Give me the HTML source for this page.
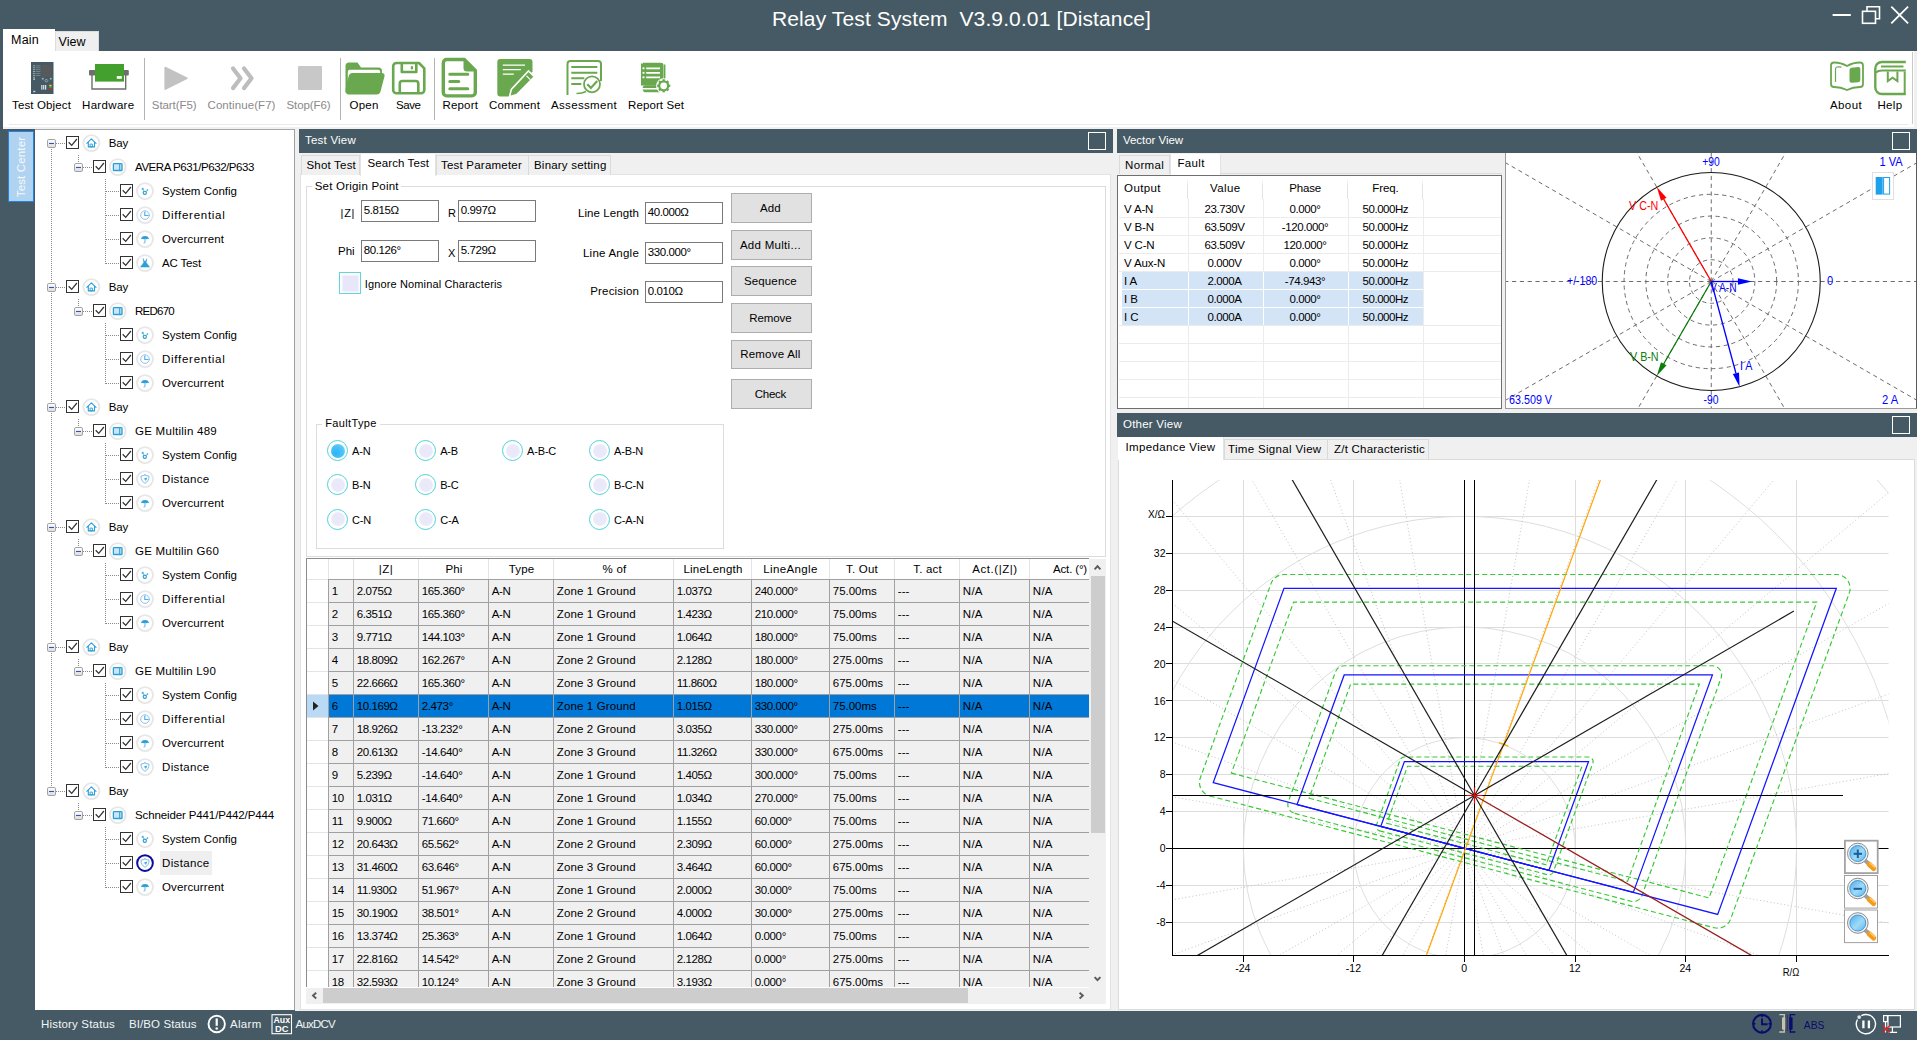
<!DOCTYPE html>
<html><head><meta charset="utf-8"><title>Relay Test System V3.9.0.01 [Distance]</title><style>
html,body{margin:0;padding:0}
body{width:1917px;height:1040px;overflow:hidden;position:relative;background:#455a64;font-family:"Liberation Sans",sans-serif;font-size:11px}
div,span.t,svg{position:absolute}
span.t{white-space:pre;display:block}
svg{overflow:visible}
svg text{font-family:"Liberation Sans",sans-serif}
</style></head><body>
<div style="left:0px;top:0px;width:1917px;height:1040px;background:#455a64"></div>
<span class="t" style="left:772.00px;top:6.42px;font-size:21px;line-height:25px;color:#fff;letter-spacing:0.121px;white-space:pre;">Relay Test System  V3.9.0.01 [Distance]</span>
<svg style="left:1828px;top:0;width:89px;height:30px" viewBox="1828 0 89 30"><g fill="none" stroke="#fff" stroke-width="1.6"><path d="M1832.6 15h18.2" stroke-width="2"/><rect x="1862.5" y="11.3" width="13" height="12"/><path d="M1867 11V6.8h12.5v12H1876"/><path d="M1891.3 6.6l16.8 16.8M1908.1 6.6l-16.8 16.8" stroke-width="1.8"/></g></svg>
<div style="left:3px;top:29px;width:51.5px;height:23px;background:#fff"></div>
<div style="left:54.5px;top:31px;width:44.5px;height:20px;background:#efefef;border:1px solid #dcdcdc;border-bottom:none;box-sizing:border-box"></div>
<span class="t" style="left:11.00px;top:33.37px;font-size:12.5px;line-height:15px;color:#000;letter-spacing:0.227px;">Main</span>
<span class="t" style="left:58.50px;top:35.37px;font-size:12.5px;line-height:15px;color:#000;letter-spacing:0.033px;">View</span>
<div style="left:3px;top:51px;width:1914px;height:78px;background:#f0f0f0"></div>
<div style="left:3px;top:51px;width:1911px;height:76px;background:#fff"></div>
<div style="left:9px;top:124px;width:1899px;height:1px;background:#e9e9e9"></div>
<div style="left:144px;top:58px;width:1px;height:62px;background:#b4b4b4"></div>
<div style="left:340px;top:58px;width:1px;height:62px;background:#b4b4b4"></div>
<div style="left:434px;top:58px;width:1px;height:62px;background:#b4b4b4"></div>
<div style="left:1911.5px;top:52px;width:1px;height:72px;background:#c8c8c8"></div>
<span class="t" style="left:12.00px;top:98.22px;font-size:11.5px;line-height:14px;color:#000;letter-spacing:0.135px;">Test Object</span>
<span class="t" style="left:82.00px;top:98.22px;font-size:11.5px;line-height:14px;color:#000;letter-spacing:0.331px;">Hardware</span>
<span class="t" style="left:151.80px;top:98.22px;font-size:11.5px;line-height:14px;color:#8a8a8a;letter-spacing:-0.074px;">Start(F5)</span>
<span class="t" style="left:207.50px;top:98.22px;font-size:11.5px;line-height:14px;color:#8a8a8a;letter-spacing:0.074px;">Continue(F7)</span>
<span class="t" style="left:286.50px;top:98.22px;font-size:11.5px;line-height:14px;color:#8a8a8a;letter-spacing:-0.092px;">Stop(F6)</span>
<span class="t" style="left:349.50px;top:98.22px;font-size:11.5px;line-height:14px;color:#000;letter-spacing:0.217px;">Open</span>
<span class="t" style="left:396.00px;top:98.22px;font-size:11.5px;line-height:14px;color:#000;letter-spacing:-0.428px;">Save</span>
<span class="t" style="left:442.50px;top:98.22px;font-size:11.5px;line-height:14px;color:#000;letter-spacing:0.164px;">Report</span>
<span class="t" style="left:489.00px;top:98.22px;font-size:11.5px;line-height:14px;color:#000;letter-spacing:0.165px;">Comment</span>
<span class="t" style="left:551.00px;top:98.22px;font-size:11.5px;line-height:14px;color:#000;letter-spacing:0.337px;">Assessment</span>
<span class="t" style="left:628.00px;top:98.22px;font-size:11.5px;line-height:14px;color:#000;letter-spacing:0.103px;">Report Set</span>
<span class="t" style="left:1830.00px;top:98.22px;font-size:11.5px;line-height:14px;color:#000;letter-spacing:0.390px;">About</span>
<span class="t" style="left:1877.40px;top:98.22px;font-size:11.5px;line-height:14px;color:#000;letter-spacing:0.387px;">Help</span>
<svg style="left:0;top:51px;width:1917px;height:77px" viewBox="0 51 1917 77"><g><rect x="31" y="62" width="22.5" height="32" fill="#455a64"/><rect x="41.8" y="65" width="9.7" height="12" fill="#58595b"/><g fill="#7f8b91"><rect x="35.5" y="65.5" width="5" height="0.8"/><rect x="35.5" y="67.4" width="5" height="0.8"/><rect x="35.5" y="69.3" width="5" height="0.8"/><rect x="35.5" y="71.2" width="5" height="0.8"/><rect x="35.5" y="73.1" width="5" height="0.8"/><rect x="35.5" y="75" width="5" height="0.8"/></g><g fill="#cfd8dc"><rect x="33.4" y="65.3" width="1.2" height="1"/><rect x="33.4" y="67.2" width="1.2" height="1"/><rect x="33.4" y="69.1" width="1.2" height="1"/><rect x="33.4" y="71" width="1.2" height="1"/><rect x="33.4" y="72.9" width="1.2" height="1"/><rect x="33.4" y="74.8" width="1.2" height="1"/><rect x="33.4" y="76.7" width="1.2" height="1"/></g><rect x="33.3" y="78.4" width="1.6" height="1.4" fill="#cfd8dc"/><rect x="33.3" y="90.8" width="2" height="1.4" fill="#cfd8dc"/><path d="M42 78.3l1.5 0l-.75 1.3zM50 78.3l1.5 0l-.75 1.3zM46.4 79l1.4 1.6l-1.4 1.6l-1.4-1.6z" fill="none" stroke="#cfd8dc" stroke-width=".6"/><g fill="#eceff1"><rect x="41.3" y="85" width="1.1" height="4.6"/><rect x="43.2" y="85" width="1.1" height="4.6"/><rect x="45.1" y="85" width="1.1" height="4.6"/></g><rect x="49.2" y="84.8" width="2.4" height="1.6" fill="#e6d72a"/><rect x="49.2" y="86.8" width="2.4" height="1.4" fill="#3aa335"/><rect x="49.2" y="88.5" width="2.4" height="1.6" fill="#e02020"/></g><g><path d="M92 75v14h33.7V75" fill="none" stroke="#6e6e6e" stroke-width="1.4"/><rect x="89" y="70" width="6.5" height="5.6" rx="1" fill="#6e6e6e"/><rect x="122.5" y="70" width="6.3" height="5.6" rx="1" fill="#6e6e6e"/><rect x="95" y="64" width="29" height="17.6" fill="#43a02f"/><rect x="116.8" y="76" width="5" height="2.8" fill="#fff"/></g><path d="M165.3 67.6L186.8 78.3L165.3 89z" fill="#c2c2c2" stroke="#c2c2c2" stroke-width="1.8" stroke-linejoin="round"/><path d="M233 68.5l7.5 9.8l-7.5 9.8M244 68.5l7.5 9.8l-7.5 9.8" fill="none" stroke="#bdbdbd" stroke-width="4.2" stroke-linecap="round" stroke-linejoin="round"/><rect x="298" y="66" width="24" height="24" rx="1" fill="#c8c8c8"/><g fill="#6aa84f"><path d="M345.5 66a3.5 3.5 0 0 1 3.5-3.5h8.5l3.5 5h17.5a3.5 3.5 0 0 1 3.5 3.5v3h-1.8v-2.2a2 2 0 0 0-2-2h-28.4a2 2 0 0 0-2 2V84l-2.3 6z"/><path d="M352.5 73h29.5a2.6 2.6 0 0 1 2.5 3.3l-4 15.2a4 4 0 0 1-3.9 3h-27.600a3.800 3.800 0 0 1-3.600-5l3.300-13.600a4 4 0 0 1 3.800-2.900z"/></g><g fill="none" stroke="#6aa84f" stroke-width="2.6" stroke-linejoin="round"><path d="M396.500 63h22.500l5.300 5.300v21.700a3.300 3.300 0 0 1-3.300 3.300h-24.500a3.300 3.300 0 0 1-3.300-3.300v-23.700a3.300 3.300 0 0 1 3.300-3.300z"/><path d="M401.800 63v9h14.500v-9"/><path d="M399.800 93v-9.500a2.500 2.500 0 0 1 2.500-2.500h13.500a2.500 2.500 0 0 1 2.500 2.500v9.500"/></g><rect x="410.800" y="66" width="2.200" height="3.600" rx="1" fill="#6aa84f"/><g><path d="M446.700 59.500h17.600l11 11v22a3.400 3.400 0 0 1-3.400 3.400h-25.200a3.400 3.400 0 0 1-3.400-3.400v-29.600a3.400 3.400 0 0 1 3.400-3.400z" fill="#fff" stroke="#6aa84f" stroke-width="3.400" stroke-linejoin="round"/><path d="M463.500 58.500l13 13h-9.500a3.500 3.500 0 0 1-3.500-3.500z" fill="#6aa84f"/><g stroke="#6aa84f" stroke-width="3" stroke-linecap="round"><path d="M449.800 74.300h18M449.800 81.500h9M449.800 88.800h18"/></g></g><g><path d="M500.300 59h29.200a3 3 0 0 1 3 3v9.500l-22.500 25h-9.700a3 3 0 0 1-3-3v-31.500a3 3 0 0 1 3-3z" fill="#6aa84f"/><g stroke="#fff" stroke-width="1.300"><path d="M502.800 65.200h22.200M502.800 69.700h18M502.800 74.200h11"/></g><path d="M528.500 71l5.800 5.800l-17.500 17.800l-7.300 2.200l1.800-7.300z" fill="#6aa84f" stroke="#fff" stroke-width="1.600"/><path d="M526.500 75.800l3.800 3.800" stroke="#fff" stroke-width="1.200"/></g><g fill="none" stroke="#6aa84f"><path d="M567.500 95v-31a3 3 0 0 1 3-3h27.500a3 3 0 0 1 3 3v17" stroke-width="2"/><path d="M571.300 67h26M571.300 72.700h26M571.300 78.300h13M571.300 84h10" stroke-width="2"/><circle cx="592" cy="84.300" r="8" stroke-width="1.800" fill="#fff"/><path d="M587.300 84.300l3.600 3.600l6.300-7" stroke-width="2.200"/><path d="M576.500 93.500q6 0 9.500-2" stroke-width="1.600"/></g><g><path d="M643 63.500h17.800a2 2 0 0 1 2 2v20.500h-17.800a3 3 0 0 0 0 5.500h17.800" fill="#6aa84f" stroke="#6aa84f" stroke-width="1.500" stroke-linejoin="round"/><rect x="641" y="63.500" width="21.800" height="22" fill="#6aa84f"/><path d="M664.700 64.500v20" stroke="#6aa84f" stroke-width="1.500"/><g stroke="#fff" stroke-width="1.700"><path d="M646.200 68.300h13.800M646.200 72.800h13.800M646.200 77.300h13.800"/></g><g fill="#fff"><rect x="642.500" y="67.400" width="2" height="1.800"/><rect x="642.500" y="71.900" width="2" height="1.800"/><rect x="642.500" y="76.400" width="2" height="1.800"/></g><rect x="642" y="88" width="18" height="1.500" fill="#fff"/><circle cx="663.700" cy="85.800" r="7.600" fill="#fff"/><circle cx="663.700" cy="85.800" r="4.500" fill="none" stroke="#6aa84f" stroke-width="2.200"/><g stroke="#6aa84f" stroke-width="2.300"><path d="M663.700 79.200v2.200" transform="rotate(0 663.700 85.800)"/><path d="M663.700 79.200v2.200" transform="rotate(45 663.700 85.800)"/><path d="M663.700 79.200v2.200" transform="rotate(90 663.700 85.800)"/><path d="M663.700 79.200v2.200" transform="rotate(135 663.700 85.800)"/><path d="M663.700 79.200v2.200" transform="rotate(180 663.700 85.800)"/><path d="M663.700 79.200v2.200" transform="rotate(225 663.700 85.800)"/><path d="M663.700 79.200v2.200" transform="rotate(270 663.700 85.800)"/><path d="M663.700 79.200v2.200" transform="rotate(315 663.700 85.800)"/></g></g><g><path d="M1831 65.500q0-3 3-3q7 0 13 3.500q6-3.500 13-3.500q3 0 3 3v18.500q0 3-3 3q-7 0-13 3q-6-3-13-3q-3 0-3-3z" fill="none" stroke="#6aa84f" stroke-width="1.800"/><path d="M1835.500 82v-13q0-3 6-1.800" fill="none" stroke="#6aa84f" stroke-width="1.200"/><path d="M1849.500 70q0-2 2-2.300l6.500-.7q2.300-.2 2.300 2v11q0 2-2 2.200l-6.500.6q-2.300.2-2.300-2z" fill="#6aa84f"/></g><g fill="none" stroke="#6aa84f"><path d="M1905.800 62h-24a6.500 6.500 0 0 0-6.500 6.500v19a6.500 6.500 0 0 0 6.500 6.500h24" stroke-width="2.400"/><path d="M1881 66.500h22.500" stroke-width="2"/><path d="M1876 72.500q2-2 6-2h23.800" stroke-width="2"/><path d="M1904.700 71.500v23" stroke-width="2"/><path d="M1887.800 71.500v9.500l4.800-3.300l4.800 3.300v-9.500" stroke-width="2"/></g></svg>
<div style="left:34.5px;top:129px;width:259.5px;height:881px;background:#fff;border-top:1px solid #a4a8aa;box-sizing:border-box"></div>
<div style="left:294px;top:129px;width:1px;height:881px;background:#a0a0a0"></div>
<div style="left:295px;top:129px;width:4px;height:882px;background:#f0f0f0"></div>
<div style="left:8.3px;top:131.2px;width:25.8px;height:70.6px;background:#b0d3f1;border:1.4px solid #2383e2;box-sizing:border-box"></div>
<span class="t" style="left:21px;top:166.6px;font-size:11.5px;line-height:14px;color:#f4f8fc;letter-spacing:.15px;transform:translate(-50%,-50%) rotate(-90deg);transform-origin:50% 50%">Test Center</span>
<div style="left:160px;top:851px;width:52px;height:24px;background:#efefef"></div>
<svg style="left:35px;top:129px;width:259px;height:881px" viewBox="35 129 259 881"><defs><linearGradient id="eg" x1="0" y1="0" x2="0" y2="1"><stop offset="0" stop-color="#fff"/><stop offset="1" stop-color="#dcdcdc"/></linearGradient></defs><path d="M51.500 148.5V787.5" stroke="#8a8a8a" stroke-width="1" stroke-dasharray="1 1" fill="none" shape-rendering="crispEdges"/><path d="M56 143.5h10" stroke="#8a8a8a" stroke-width="1" stroke-dasharray="1 1" fill="none" shape-rendering="crispEdges"/><rect x="47.5" y="139.5" width="8" height="8" rx="1.3" fill="url(#eg)" stroke="#a2a2a2" stroke-width="1"/><path d="M49 143.5h5" stroke="#3c4fb8" stroke-width="1.100"/><rect x="66.5" y="136.5" width="12" height="12" fill="#fff" stroke="#333" stroke-width="1"/><path d="M68.7 142.3l3 3.100l5.200-6.400" fill="none" stroke="#333" stroke-width="1.250"/><circle cx="91.4" cy="143.1" r="8" fill="#fff" stroke="#e7e7e7" stroke-width="1.9"/><g transform="translate(91.4 143.1)" fill="none" stroke="#2a9fd8" stroke-width="1.1" stroke-linecap="round" stroke-linejoin="round"><path d="M-4.600 .2L0-4.200L4.600 .2"/><path d="M-3.100-.8v4.600h6.200v-4.600"/><rect x="-1" y="1" width="2" height="2.800" stroke-width=".9"/></g><path d="M78.500 154.5v8" stroke="#8a8a8a" stroke-width="1" stroke-dasharray="1 1" fill="none" shape-rendering="crispEdges"/><path d="M83 167.5h10" stroke="#8a8a8a" stroke-width="1" stroke-dasharray="1 1" fill="none" shape-rendering="crispEdges"/><rect x="74.5" y="163.5" width="8" height="8" rx="1.3" fill="url(#eg)" stroke="#a2a2a2" stroke-width="1"/><path d="M76 167.5h5" stroke="#3c4fb8" stroke-width="1.100"/><rect x="93.5" y="160.5" width="12" height="12" fill="#fff" stroke="#333" stroke-width="1"/><path d="M95.7 166.3l3 3.100l5.200-6.400" fill="none" stroke="#333" stroke-width="1.250"/><circle cx="117.7" cy="167.1" r="8" fill="#fff" stroke="#e7e7e7" stroke-width="1.9"/><g transform="translate(117.7 167.1)" fill="none" stroke="#2a9fd8" stroke-width="1.1" stroke-linecap="round" stroke-linejoin="round"><rect x="-4.300" y="-3.400" width="8.600" height="6.800" rx=".6" stroke-width="1.300" fill="#cfe6f7"/><path d="M2-3.400v6.800" stroke-width="1.100"/></g><path d="M105.500 178.5V263.5" stroke="#8a8a8a" stroke-width="1" stroke-dasharray="1 1" fill="none" shape-rendering="crispEdges"/><path d="M105.500 191.5h14" stroke="#8a8a8a" stroke-width="1" stroke-dasharray="1 1" fill="none" shape-rendering="crispEdges"/><rect x="120.5" y="184.5" width="12" height="12" fill="#fff" stroke="#333" stroke-width="1"/><path d="M122.7 190.3l3 3.100l5.200-6.400" fill="none" stroke="#333" stroke-width="1.250"/><circle cx="145" cy="191.1" r="8" fill="#fff" stroke="#e7e7e7" stroke-width="1.9"/><g transform="translate(145 191.1)" fill="none" stroke="#2a9fd8" stroke-width="1.1" stroke-linecap="round" stroke-linejoin="round"><circle cx="-.2" cy="1.700" r="1.600" stroke-width="1.150"/><circle cx="-2.300" cy="-2.300" r="1.150" fill="#5ab0e6" stroke="none"/><circle cx="2.500" cy="-1.100" r=".800" fill="#2a9fd8" stroke="none"/><path d="M-1.800-1.500L-.9.400M2.100-.700L1 .600" stroke-width=".700"/></g><path d="M105.500 215.5h14" stroke="#8a8a8a" stroke-width="1" stroke-dasharray="1 1" fill="none" shape-rendering="crispEdges"/><rect x="120.5" y="208.5" width="12" height="12" fill="#fff" stroke="#333" stroke-width="1"/><path d="M122.7 214.3l3 3.100l5.200-6.400" fill="none" stroke="#333" stroke-width="1.250"/><circle cx="145" cy="215.1" r="8" fill="#fff" stroke="#e7e7e7" stroke-width="1.9"/><g transform="translate(145 215.1)" fill="none" stroke="#2a9fd8" stroke-width="1.1" stroke-linecap="round" stroke-linejoin="round"><circle cx="0" cy="0" r="4.300" stroke="#8cc3ec" stroke-width="1"/><path d="M-.2-3v3.400h3.200" stroke="#5aaae6" stroke-width="1.200"/></g><path d="M105.500 239.5h14" stroke="#8a8a8a" stroke-width="1" stroke-dasharray="1 1" fill="none" shape-rendering="crispEdges"/><rect x="120.5" y="232.5" width="12" height="12" fill="#fff" stroke="#333" stroke-width="1"/><path d="M122.7 238.3l3 3.100l5.200-6.400" fill="none" stroke="#333" stroke-width="1.250"/><circle cx="145" cy="239.1" r="8" fill="#fff" stroke="#e7e7e7" stroke-width="1.9"/><g transform="translate(145 239.1)" fill="none" stroke="#2a9fd8" stroke-width="1.1" stroke-linecap="round" stroke-linejoin="round"><path d="M-4.200 .2A4.300 4.300 0 0 1 4.200 .2q-1.400-1.200-2.800 0q-1.400-1.200-2.800 0q-1.400-1.200-2.800 0z" fill="#2a9fd8" stroke="none"/><path d="M0-.3v3.300q0 1-1 1" stroke-width=".8"/></g><path d="M105.500 263.5h14" stroke="#8a8a8a" stroke-width="1" stroke-dasharray="1 1" fill="none" shape-rendering="crispEdges"/><rect x="120.5" y="256.5" width="12" height="12" fill="#fff" stroke="#333" stroke-width="1"/><path d="M122.7 262.3l3 3.100l5.200-6.400" fill="none" stroke="#333" stroke-width="1.250"/><circle cx="145" cy="263.1" r="8" fill="#fff" stroke="#e7e7e7" stroke-width="1.9"/><g transform="translate(145 263.1)" fill="none" stroke="#2a9fd8" stroke-width="1.1" stroke-linecap="round" stroke-linejoin="round"><path d="M-1.800-4.300l.6 3.600l-3.300 4.700h9l-3.300-4.700l.6-3.600l-1.200 2.400h-1.200z" fill="#2a9fd8" stroke="#2a9fd8" stroke-width=".5"/></g><path d="M56 287.5h10" stroke="#8a8a8a" stroke-width="1" stroke-dasharray="1 1" fill="none" shape-rendering="crispEdges"/><rect x="47.5" y="283.5" width="8" height="8" rx="1.3" fill="url(#eg)" stroke="#a2a2a2" stroke-width="1"/><path d="M49 287.5h5" stroke="#3c4fb8" stroke-width="1.100"/><rect x="66.5" y="280.5" width="12" height="12" fill="#fff" stroke="#333" stroke-width="1"/><path d="M68.7 286.3l3 3.100l5.200-6.400" fill="none" stroke="#333" stroke-width="1.250"/><circle cx="91.4" cy="287.1" r="8" fill="#fff" stroke="#e7e7e7" stroke-width="1.9"/><g transform="translate(91.4 287.1)" fill="none" stroke="#2a9fd8" stroke-width="1.1" stroke-linecap="round" stroke-linejoin="round"><path d="M-4.600 .2L0-4.200L4.600 .2"/><path d="M-3.100-.8v4.600h6.200v-4.600"/><rect x="-1" y="1" width="2" height="2.800" stroke-width=".9"/></g><path d="M78.500 298.5v8" stroke="#8a8a8a" stroke-width="1" stroke-dasharray="1 1" fill="none" shape-rendering="crispEdges"/><path d="M83 311.5h10" stroke="#8a8a8a" stroke-width="1" stroke-dasharray="1 1" fill="none" shape-rendering="crispEdges"/><rect x="74.5" y="307.5" width="8" height="8" rx="1.3" fill="url(#eg)" stroke="#a2a2a2" stroke-width="1"/><path d="M76 311.5h5" stroke="#3c4fb8" stroke-width="1.100"/><rect x="93.5" y="304.5" width="12" height="12" fill="#fff" stroke="#333" stroke-width="1"/><path d="M95.7 310.3l3 3.100l5.200-6.400" fill="none" stroke="#333" stroke-width="1.250"/><circle cx="117.7" cy="311.1" r="8" fill="#fff" stroke="#e7e7e7" stroke-width="1.9"/><g transform="translate(117.7 311.1)" fill="none" stroke="#2a9fd8" stroke-width="1.1" stroke-linecap="round" stroke-linejoin="round"><rect x="-4.300" y="-3.400" width="8.600" height="6.800" rx=".6" stroke-width="1.300" fill="#cfe6f7"/><path d="M2-3.400v6.800" stroke-width="1.100"/></g><path d="M105.500 322.5V383.5" stroke="#8a8a8a" stroke-width="1" stroke-dasharray="1 1" fill="none" shape-rendering="crispEdges"/><path d="M105.500 335.5h14" stroke="#8a8a8a" stroke-width="1" stroke-dasharray="1 1" fill="none" shape-rendering="crispEdges"/><rect x="120.5" y="328.5" width="12" height="12" fill="#fff" stroke="#333" stroke-width="1"/><path d="M122.7 334.3l3 3.100l5.200-6.400" fill="none" stroke="#333" stroke-width="1.250"/><circle cx="145" cy="335.1" r="8" fill="#fff" stroke="#e7e7e7" stroke-width="1.9"/><g transform="translate(145 335.1)" fill="none" stroke="#2a9fd8" stroke-width="1.1" stroke-linecap="round" stroke-linejoin="round"><circle cx="-.2" cy="1.700" r="1.600" stroke-width="1.150"/><circle cx="-2.300" cy="-2.300" r="1.150" fill="#5ab0e6" stroke="none"/><circle cx="2.500" cy="-1.100" r=".800" fill="#2a9fd8" stroke="none"/><path d="M-1.800-1.500L-.9.400M2.100-.700L1 .600" stroke-width=".700"/></g><path d="M105.500 359.5h14" stroke="#8a8a8a" stroke-width="1" stroke-dasharray="1 1" fill="none" shape-rendering="crispEdges"/><rect x="120.5" y="352.5" width="12" height="12" fill="#fff" stroke="#333" stroke-width="1"/><path d="M122.7 358.3l3 3.100l5.200-6.400" fill="none" stroke="#333" stroke-width="1.250"/><circle cx="145" cy="359.1" r="8" fill="#fff" stroke="#e7e7e7" stroke-width="1.9"/><g transform="translate(145 359.1)" fill="none" stroke="#2a9fd8" stroke-width="1.1" stroke-linecap="round" stroke-linejoin="round"><circle cx="0" cy="0" r="4.300" stroke="#8cc3ec" stroke-width="1"/><path d="M-.2-3v3.400h3.200" stroke="#5aaae6" stroke-width="1.200"/></g><path d="M105.500 383.5h14" stroke="#8a8a8a" stroke-width="1" stroke-dasharray="1 1" fill="none" shape-rendering="crispEdges"/><rect x="120.5" y="376.5" width="12" height="12" fill="#fff" stroke="#333" stroke-width="1"/><path d="M122.7 382.3l3 3.100l5.200-6.400" fill="none" stroke="#333" stroke-width="1.250"/><circle cx="145" cy="383.1" r="8" fill="#fff" stroke="#e7e7e7" stroke-width="1.9"/><g transform="translate(145 383.1)" fill="none" stroke="#2a9fd8" stroke-width="1.1" stroke-linecap="round" stroke-linejoin="round"><path d="M-4.200 .2A4.300 4.300 0 0 1 4.200 .2q-1.400-1.200-2.800 0q-1.400-1.200-2.800 0q-1.400-1.200-2.800 0z" fill="#2a9fd8" stroke="none"/><path d="M0-.3v3.300q0 1-1 1" stroke-width=".8"/></g><path d="M56 407.5h10" stroke="#8a8a8a" stroke-width="1" stroke-dasharray="1 1" fill="none" shape-rendering="crispEdges"/><rect x="47.5" y="403.5" width="8" height="8" rx="1.3" fill="url(#eg)" stroke="#a2a2a2" stroke-width="1"/><path d="M49 407.5h5" stroke="#3c4fb8" stroke-width="1.100"/><rect x="66.5" y="400.5" width="12" height="12" fill="#fff" stroke="#333" stroke-width="1"/><path d="M68.7 406.3l3 3.100l5.200-6.400" fill="none" stroke="#333" stroke-width="1.250"/><circle cx="91.4" cy="407.1" r="8" fill="#fff" stroke="#e7e7e7" stroke-width="1.9"/><g transform="translate(91.4 407.1)" fill="none" stroke="#2a9fd8" stroke-width="1.1" stroke-linecap="round" stroke-linejoin="round"><path d="M-4.600 .2L0-4.200L4.600 .2"/><path d="M-3.100-.8v4.600h6.200v-4.600"/><rect x="-1" y="1" width="2" height="2.800" stroke-width=".9"/></g><path d="M78.500 418.5v8" stroke="#8a8a8a" stroke-width="1" stroke-dasharray="1 1" fill="none" shape-rendering="crispEdges"/><path d="M83 431.5h10" stroke="#8a8a8a" stroke-width="1" stroke-dasharray="1 1" fill="none" shape-rendering="crispEdges"/><rect x="74.5" y="427.5" width="8" height="8" rx="1.3" fill="url(#eg)" stroke="#a2a2a2" stroke-width="1"/><path d="M76 431.5h5" stroke="#3c4fb8" stroke-width="1.100"/><rect x="93.5" y="424.5" width="12" height="12" fill="#fff" stroke="#333" stroke-width="1"/><path d="M95.7 430.3l3 3.100l5.200-6.400" fill="none" stroke="#333" stroke-width="1.250"/><circle cx="117.7" cy="431.1" r="8" fill="#fff" stroke="#e7e7e7" stroke-width="1.9"/><g transform="translate(117.7 431.1)" fill="none" stroke="#2a9fd8" stroke-width="1.1" stroke-linecap="round" stroke-linejoin="round"><rect x="-4.300" y="-3.400" width="8.600" height="6.800" rx=".6" stroke-width="1.300" fill="#cfe6f7"/><path d="M2-3.400v6.800" stroke-width="1.100"/></g><path d="M105.500 442.5V503.5" stroke="#8a8a8a" stroke-width="1" stroke-dasharray="1 1" fill="none" shape-rendering="crispEdges"/><path d="M105.500 455.5h14" stroke="#8a8a8a" stroke-width="1" stroke-dasharray="1 1" fill="none" shape-rendering="crispEdges"/><rect x="120.5" y="448.5" width="12" height="12" fill="#fff" stroke="#333" stroke-width="1"/><path d="M122.7 454.3l3 3.100l5.200-6.400" fill="none" stroke="#333" stroke-width="1.250"/><circle cx="145" cy="455.1" r="8" fill="#fff" stroke="#e7e7e7" stroke-width="1.9"/><g transform="translate(145 455.1)" fill="none" stroke="#2a9fd8" stroke-width="1.1" stroke-linecap="round" stroke-linejoin="round"><circle cx="-.2" cy="1.700" r="1.600" stroke-width="1.150"/><circle cx="-2.300" cy="-2.300" r="1.150" fill="#5ab0e6" stroke="none"/><circle cx="2.500" cy="-1.100" r=".800" fill="#2a9fd8" stroke="none"/><path d="M-1.800-1.500L-.9.400M2.100-.700L1 .600" stroke-width=".700"/></g><path d="M105.500 479.5h14" stroke="#8a8a8a" stroke-width="1" stroke-dasharray="1 1" fill="none" shape-rendering="crispEdges"/><rect x="120.5" y="472.5" width="12" height="12" fill="#fff" stroke="#333" stroke-width="1"/><path d="M122.7 478.3l3 3.100l5.200-6.400" fill="none" stroke="#333" stroke-width="1.250"/><circle cx="145" cy="479.1" r="8" fill="#fff" stroke="#e7e7e7" stroke-width="1.9"/><g transform="translate(145 479.1)" fill="none" stroke="#2a9fd8" stroke-width="1.1" stroke-linecap="round" stroke-linejoin="round"><path d="M0-4.200q2 1.200 4 1.200q.2 4.800-4 7.200q-4.200-2.400-4-7.200q2 0 4-1.200z" stroke="#7fbbe9" stroke-width="1"/><path d="M-1.700-.2L2.200-1.700L.8 2.200L.2 .4z" fill="#2a9fd8" stroke="none"/></g><path d="M105.500 503.5h14" stroke="#8a8a8a" stroke-width="1" stroke-dasharray="1 1" fill="none" shape-rendering="crispEdges"/><rect x="120.5" y="496.5" width="12" height="12" fill="#fff" stroke="#333" stroke-width="1"/><path d="M122.7 502.3l3 3.100l5.200-6.400" fill="none" stroke="#333" stroke-width="1.250"/><circle cx="145" cy="503.1" r="8" fill="#fff" stroke="#e7e7e7" stroke-width="1.9"/><g transform="translate(145 503.1)" fill="none" stroke="#2a9fd8" stroke-width="1.1" stroke-linecap="round" stroke-linejoin="round"><path d="M-4.200 .2A4.300 4.300 0 0 1 4.200 .2q-1.400-1.200-2.800 0q-1.400-1.200-2.800 0q-1.400-1.200-2.800 0z" fill="#2a9fd8" stroke="none"/><path d="M0-.3v3.300q0 1-1 1" stroke-width=".8"/></g><path d="M56 527.5h10" stroke="#8a8a8a" stroke-width="1" stroke-dasharray="1 1" fill="none" shape-rendering="crispEdges"/><rect x="47.5" y="523.5" width="8" height="8" rx="1.3" fill="url(#eg)" stroke="#a2a2a2" stroke-width="1"/><path d="M49 527.5h5" stroke="#3c4fb8" stroke-width="1.100"/><rect x="66.5" y="520.5" width="12" height="12" fill="#fff" stroke="#333" stroke-width="1"/><path d="M68.7 526.3l3 3.100l5.200-6.400" fill="none" stroke="#333" stroke-width="1.250"/><circle cx="91.4" cy="527.1" r="8" fill="#fff" stroke="#e7e7e7" stroke-width="1.9"/><g transform="translate(91.4 527.1)" fill="none" stroke="#2a9fd8" stroke-width="1.1" stroke-linecap="round" stroke-linejoin="round"><path d="M-4.600 .2L0-4.200L4.600 .2"/><path d="M-3.100-.8v4.600h6.200v-4.600"/><rect x="-1" y="1" width="2" height="2.800" stroke-width=".9"/></g><path d="M78.500 538.5v8" stroke="#8a8a8a" stroke-width="1" stroke-dasharray="1 1" fill="none" shape-rendering="crispEdges"/><path d="M83 551.5h10" stroke="#8a8a8a" stroke-width="1" stroke-dasharray="1 1" fill="none" shape-rendering="crispEdges"/><rect x="74.5" y="547.5" width="8" height="8" rx="1.3" fill="url(#eg)" stroke="#a2a2a2" stroke-width="1"/><path d="M76 551.5h5" stroke="#3c4fb8" stroke-width="1.100"/><rect x="93.5" y="544.5" width="12" height="12" fill="#fff" stroke="#333" stroke-width="1"/><path d="M95.7 550.3l3 3.100l5.200-6.400" fill="none" stroke="#333" stroke-width="1.250"/><circle cx="117.7" cy="551.1" r="8" fill="#fff" stroke="#e7e7e7" stroke-width="1.9"/><g transform="translate(117.7 551.1)" fill="none" stroke="#2a9fd8" stroke-width="1.1" stroke-linecap="round" stroke-linejoin="round"><rect x="-4.300" y="-3.400" width="8.600" height="6.800" rx=".6" stroke-width="1.300" fill="#cfe6f7"/><path d="M2-3.400v6.800" stroke-width="1.100"/></g><path d="M105.500 562.5V623.5" stroke="#8a8a8a" stroke-width="1" stroke-dasharray="1 1" fill="none" shape-rendering="crispEdges"/><path d="M105.500 575.5h14" stroke="#8a8a8a" stroke-width="1" stroke-dasharray="1 1" fill="none" shape-rendering="crispEdges"/><rect x="120.5" y="568.5" width="12" height="12" fill="#fff" stroke="#333" stroke-width="1"/><path d="M122.7 574.3l3 3.100l5.200-6.400" fill="none" stroke="#333" stroke-width="1.250"/><circle cx="145" cy="575.1" r="8" fill="#fff" stroke="#e7e7e7" stroke-width="1.9"/><g transform="translate(145 575.1)" fill="none" stroke="#2a9fd8" stroke-width="1.1" stroke-linecap="round" stroke-linejoin="round"><circle cx="-.2" cy="1.700" r="1.600" stroke-width="1.150"/><circle cx="-2.300" cy="-2.300" r="1.150" fill="#5ab0e6" stroke="none"/><circle cx="2.500" cy="-1.100" r=".800" fill="#2a9fd8" stroke="none"/><path d="M-1.800-1.500L-.9.400M2.100-.700L1 .600" stroke-width=".700"/></g><path d="M105.500 599.5h14" stroke="#8a8a8a" stroke-width="1" stroke-dasharray="1 1" fill="none" shape-rendering="crispEdges"/><rect x="120.5" y="592.5" width="12" height="12" fill="#fff" stroke="#333" stroke-width="1"/><path d="M122.7 598.3l3 3.100l5.200-6.400" fill="none" stroke="#333" stroke-width="1.250"/><circle cx="145" cy="599.1" r="8" fill="#fff" stroke="#e7e7e7" stroke-width="1.9"/><g transform="translate(145 599.1)" fill="none" stroke="#2a9fd8" stroke-width="1.1" stroke-linecap="round" stroke-linejoin="round"><circle cx="0" cy="0" r="4.300" stroke="#8cc3ec" stroke-width="1"/><path d="M-.2-3v3.400h3.200" stroke="#5aaae6" stroke-width="1.200"/></g><path d="M105.500 623.5h14" stroke="#8a8a8a" stroke-width="1" stroke-dasharray="1 1" fill="none" shape-rendering="crispEdges"/><rect x="120.5" y="616.5" width="12" height="12" fill="#fff" stroke="#333" stroke-width="1"/><path d="M122.7 622.3l3 3.100l5.200-6.400" fill="none" stroke="#333" stroke-width="1.250"/><circle cx="145" cy="623.1" r="8" fill="#fff" stroke="#e7e7e7" stroke-width="1.9"/><g transform="translate(145 623.1)" fill="none" stroke="#2a9fd8" stroke-width="1.1" stroke-linecap="round" stroke-linejoin="round"><path d="M-4.200 .2A4.300 4.300 0 0 1 4.200 .2q-1.400-1.200-2.800 0q-1.400-1.200-2.800 0q-1.400-1.200-2.800 0z" fill="#2a9fd8" stroke="none"/><path d="M0-.3v3.300q0 1-1 1" stroke-width=".8"/></g><path d="M56 647.5h10" stroke="#8a8a8a" stroke-width="1" stroke-dasharray="1 1" fill="none" shape-rendering="crispEdges"/><rect x="47.5" y="643.5" width="8" height="8" rx="1.3" fill="url(#eg)" stroke="#a2a2a2" stroke-width="1"/><path d="M49 647.5h5" stroke="#3c4fb8" stroke-width="1.100"/><rect x="66.5" y="640.5" width="12" height="12" fill="#fff" stroke="#333" stroke-width="1"/><path d="M68.7 646.3l3 3.100l5.200-6.400" fill="none" stroke="#333" stroke-width="1.250"/><circle cx="91.4" cy="647.1" r="8" fill="#fff" stroke="#e7e7e7" stroke-width="1.9"/><g transform="translate(91.4 647.1)" fill="none" stroke="#2a9fd8" stroke-width="1.1" stroke-linecap="round" stroke-linejoin="round"><path d="M-4.600 .2L0-4.200L4.600 .2"/><path d="M-3.100-.8v4.600h6.200v-4.600"/><rect x="-1" y="1" width="2" height="2.800" stroke-width=".9"/></g><path d="M78.500 658.5v8" stroke="#8a8a8a" stroke-width="1" stroke-dasharray="1 1" fill="none" shape-rendering="crispEdges"/><path d="M83 671.5h10" stroke="#8a8a8a" stroke-width="1" stroke-dasharray="1 1" fill="none" shape-rendering="crispEdges"/><rect x="74.5" y="667.5" width="8" height="8" rx="1.3" fill="url(#eg)" stroke="#a2a2a2" stroke-width="1"/><path d="M76 671.5h5" stroke="#3c4fb8" stroke-width="1.100"/><rect x="93.5" y="664.5" width="12" height="12" fill="#fff" stroke="#333" stroke-width="1"/><path d="M95.7 670.3l3 3.100l5.200-6.400" fill="none" stroke="#333" stroke-width="1.250"/><circle cx="117.7" cy="671.1" r="8" fill="#fff" stroke="#e7e7e7" stroke-width="1.9"/><g transform="translate(117.7 671.1)" fill="none" stroke="#2a9fd8" stroke-width="1.1" stroke-linecap="round" stroke-linejoin="round"><rect x="-4.300" y="-3.400" width="8.600" height="6.800" rx=".6" stroke-width="1.300" fill="#cfe6f7"/><path d="M2-3.400v6.800" stroke-width="1.100"/></g><path d="M105.500 682.5V767.5" stroke="#8a8a8a" stroke-width="1" stroke-dasharray="1 1" fill="none" shape-rendering="crispEdges"/><path d="M105.500 695.5h14" stroke="#8a8a8a" stroke-width="1" stroke-dasharray="1 1" fill="none" shape-rendering="crispEdges"/><rect x="120.5" y="688.5" width="12" height="12" fill="#fff" stroke="#333" stroke-width="1"/><path d="M122.7 694.3l3 3.100l5.200-6.400" fill="none" stroke="#333" stroke-width="1.250"/><circle cx="145" cy="695.1" r="8" fill="#fff" stroke="#e7e7e7" stroke-width="1.9"/><g transform="translate(145 695.1)" fill="none" stroke="#2a9fd8" stroke-width="1.1" stroke-linecap="round" stroke-linejoin="round"><circle cx="-.2" cy="1.700" r="1.600" stroke-width="1.150"/><circle cx="-2.300" cy="-2.300" r="1.150" fill="#5ab0e6" stroke="none"/><circle cx="2.500" cy="-1.100" r=".800" fill="#2a9fd8" stroke="none"/><path d="M-1.800-1.500L-.9.400M2.100-.700L1 .600" stroke-width=".700"/></g><path d="M105.500 719.5h14" stroke="#8a8a8a" stroke-width="1" stroke-dasharray="1 1" fill="none" shape-rendering="crispEdges"/><rect x="120.5" y="712.5" width="12" height="12" fill="#fff" stroke="#333" stroke-width="1"/><path d="M122.7 718.3l3 3.100l5.200-6.400" fill="none" stroke="#333" stroke-width="1.250"/><circle cx="145" cy="719.1" r="8" fill="#fff" stroke="#e7e7e7" stroke-width="1.9"/><g transform="translate(145 719.1)" fill="none" stroke="#2a9fd8" stroke-width="1.1" stroke-linecap="round" stroke-linejoin="round"><circle cx="0" cy="0" r="4.300" stroke="#8cc3ec" stroke-width="1"/><path d="M-.2-3v3.400h3.200" stroke="#5aaae6" stroke-width="1.200"/></g><path d="M105.500 743.5h14" stroke="#8a8a8a" stroke-width="1" stroke-dasharray="1 1" fill="none" shape-rendering="crispEdges"/><rect x="120.5" y="736.5" width="12" height="12" fill="#fff" stroke="#333" stroke-width="1"/><path d="M122.7 742.3l3 3.100l5.200-6.400" fill="none" stroke="#333" stroke-width="1.250"/><circle cx="145" cy="743.1" r="8" fill="#fff" stroke="#e7e7e7" stroke-width="1.9"/><g transform="translate(145 743.1)" fill="none" stroke="#2a9fd8" stroke-width="1.1" stroke-linecap="round" stroke-linejoin="round"><path d="M-4.200 .2A4.300 4.300 0 0 1 4.200 .2q-1.400-1.200-2.800 0q-1.400-1.200-2.800 0q-1.400-1.200-2.800 0z" fill="#2a9fd8" stroke="none"/><path d="M0-.3v3.300q0 1-1 1" stroke-width=".8"/></g><path d="M105.500 767.5h14" stroke="#8a8a8a" stroke-width="1" stroke-dasharray="1 1" fill="none" shape-rendering="crispEdges"/><rect x="120.5" y="760.5" width="12" height="12" fill="#fff" stroke="#333" stroke-width="1"/><path d="M122.7 766.3l3 3.100l5.200-6.400" fill="none" stroke="#333" stroke-width="1.250"/><circle cx="145" cy="767.1" r="8" fill="#fff" stroke="#e7e7e7" stroke-width="1.9"/><g transform="translate(145 767.1)" fill="none" stroke="#2a9fd8" stroke-width="1.1" stroke-linecap="round" stroke-linejoin="round"><path d="M0-4.200q2 1.200 4 1.200q.2 4.800-4 7.200q-4.200-2.400-4-7.200q2 0 4-1.200z" stroke="#7fbbe9" stroke-width="1"/><path d="M-1.700-.2L2.200-1.700L.8 2.200L.2 .4z" fill="#2a9fd8" stroke="none"/></g><path d="M56 791.5h10" stroke="#8a8a8a" stroke-width="1" stroke-dasharray="1 1" fill="none" shape-rendering="crispEdges"/><rect x="47.5" y="787.5" width="8" height="8" rx="1.3" fill="url(#eg)" stroke="#a2a2a2" stroke-width="1"/><path d="M49 791.5h5" stroke="#3c4fb8" stroke-width="1.100"/><rect x="66.5" y="784.5" width="12" height="12" fill="#fff" stroke="#333" stroke-width="1"/><path d="M68.7 790.3l3 3.100l5.200-6.400" fill="none" stroke="#333" stroke-width="1.250"/><circle cx="91.4" cy="791.1" r="8" fill="#fff" stroke="#e7e7e7" stroke-width="1.9"/><g transform="translate(91.4 791.1)" fill="none" stroke="#2a9fd8" stroke-width="1.1" stroke-linecap="round" stroke-linejoin="round"><path d="M-4.600 .2L0-4.200L4.600 .2"/><path d="M-3.100-.8v4.600h6.200v-4.600"/><rect x="-1" y="1" width="2" height="2.800" stroke-width=".9"/></g><path d="M78.500 802.5v8" stroke="#8a8a8a" stroke-width="1" stroke-dasharray="1 1" fill="none" shape-rendering="crispEdges"/><path d="M83 815.5h10" stroke="#8a8a8a" stroke-width="1" stroke-dasharray="1 1" fill="none" shape-rendering="crispEdges"/><rect x="74.5" y="811.5" width="8" height="8" rx="1.3" fill="url(#eg)" stroke="#a2a2a2" stroke-width="1"/><path d="M76 815.5h5" stroke="#3c4fb8" stroke-width="1.100"/><rect x="93.5" y="808.5" width="12" height="12" fill="#fff" stroke="#333" stroke-width="1"/><path d="M95.7 814.3l3 3.100l5.200-6.400" fill="none" stroke="#333" stroke-width="1.250"/><circle cx="117.7" cy="815.1" r="8" fill="#fff" stroke="#e7e7e7" stroke-width="1.9"/><g transform="translate(117.7 815.1)" fill="none" stroke="#2a9fd8" stroke-width="1.1" stroke-linecap="round" stroke-linejoin="round"><rect x="-4.300" y="-3.400" width="8.600" height="6.800" rx=".6" stroke-width="1.300" fill="#cfe6f7"/><path d="M2-3.400v6.800" stroke-width="1.100"/></g><path d="M105.500 826.5V887.5" stroke="#8a8a8a" stroke-width="1" stroke-dasharray="1 1" fill="none" shape-rendering="crispEdges"/><path d="M105.500 839.5h14" stroke="#8a8a8a" stroke-width="1" stroke-dasharray="1 1" fill="none" shape-rendering="crispEdges"/><rect x="120.5" y="832.5" width="12" height="12" fill="#fff" stroke="#333" stroke-width="1"/><path d="M122.7 838.3l3 3.100l5.200-6.400" fill="none" stroke="#333" stroke-width="1.250"/><circle cx="145" cy="839.1" r="8" fill="#fff" stroke="#e7e7e7" stroke-width="1.9"/><g transform="translate(145 839.1)" fill="none" stroke="#2a9fd8" stroke-width="1.1" stroke-linecap="round" stroke-linejoin="round"><circle cx="-.2" cy="1.700" r="1.600" stroke-width="1.150"/><circle cx="-2.300" cy="-2.300" r="1.150" fill="#5ab0e6" stroke="none"/><circle cx="2.500" cy="-1.100" r=".800" fill="#2a9fd8" stroke="none"/><path d="M-1.800-1.500L-.9.400M2.100-.700L1 .600" stroke-width=".700"/></g><path d="M105.500 863.5h14" stroke="#8a8a8a" stroke-width="1" stroke-dasharray="1 1" fill="none" shape-rendering="crispEdges"/><rect x="120.5" y="856.5" width="12" height="12" fill="#fff" stroke="#333" stroke-width="1"/><path d="M122.7 862.3l3 3.100l5.200-6.400" fill="none" stroke="#333" stroke-width="1.250"/><circle cx="145" cy="863.1" r="7.85" fill="#fff" stroke="#0d0d9c" stroke-width="2"/><g transform="translate(145 863.1)" fill="none" stroke="#2a9fd8" stroke-width="1.1" stroke-linecap="round" stroke-linejoin="round"><path d="M0-4.200q2 1.200 4 1.200q.2 4.800-4 7.200q-4.200-2.400-4-7.200q2 0 4-1.200z" stroke="#7fbbe9" stroke-width="1"/><path d="M-1.700-.2L2.200-1.700L.8 2.200L.2 .4z" fill="#2a9fd8" stroke="none"/></g><path d="M105.500 887.5h14" stroke="#8a8a8a" stroke-width="1" stroke-dasharray="1 1" fill="none" shape-rendering="crispEdges"/><rect x="120.5" y="880.5" width="12" height="12" fill="#fff" stroke="#333" stroke-width="1"/><path d="M122.7 886.3l3 3.100l5.200-6.400" fill="none" stroke="#333" stroke-width="1.250"/><circle cx="145" cy="887.1" r="8" fill="#fff" stroke="#e7e7e7" stroke-width="1.9"/><g transform="translate(145 887.1)" fill="none" stroke="#2a9fd8" stroke-width="1.1" stroke-linecap="round" stroke-linejoin="round"><path d="M-4.200 .2A4.300 4.300 0 0 1 4.200 .2q-1.400-1.200-2.800 0q-1.400-1.200-2.800 0q-1.400-1.200-2.800 0z" fill="#2a9fd8" stroke="none"/><path d="M0-.3v3.300q0 1-1 1" stroke-width=".8"/></g></svg>
<span class="t" style="left:108.70px;top:136.22px;font-size:11.5px;line-height:14px;color:#000;letter-spacing:-0.172px;">Bay</span>
<span class="t" style="left:135.00px;top:160.22px;font-size:11.5px;line-height:14px;color:#000;letter-spacing:-0.433px;">AVERA P631/P632/P633</span>
<span class="t" style="left:162.00px;top:184.22px;font-size:11.5px;line-height:14px;color:#000;letter-spacing:0.017px;">System Config</span>
<span class="t" style="left:162.00px;top:208.22px;font-size:11.5px;line-height:14px;color:#000;letter-spacing:0.729px;">Differential</span>
<span class="t" style="left:162.00px;top:232.22px;font-size:11.5px;line-height:14px;color:#000;letter-spacing:0.118px;">Overcurrent</span>
<span class="t" style="left:162.00px;top:256.22px;font-size:11.5px;line-height:14px;color:#000;letter-spacing:-0.150px;">AC Test</span>
<span class="t" style="left:108.70px;top:280.22px;font-size:11.5px;line-height:14px;color:#000;letter-spacing:-0.172px;">Bay</span>
<span class="t" style="left:135.00px;top:304.22px;font-size:11.5px;line-height:14px;color:#000;letter-spacing:-0.744px;">RED670</span>
<span class="t" style="left:162.00px;top:328.22px;font-size:11.5px;line-height:14px;color:#000;letter-spacing:0.017px;">System Config</span>
<span class="t" style="left:162.00px;top:352.22px;font-size:11.5px;line-height:14px;color:#000;letter-spacing:0.729px;">Differential</span>
<span class="t" style="left:162.00px;top:376.22px;font-size:11.5px;line-height:14px;color:#000;letter-spacing:0.118px;">Overcurrent</span>
<span class="t" style="left:108.70px;top:400.22px;font-size:11.5px;line-height:14px;color:#000;letter-spacing:-0.172px;">Bay</span>
<span class="t" style="left:135.00px;top:424.22px;font-size:11.5px;line-height:14px;color:#000;letter-spacing:0.268px;">GE Multilin 489</span>
<span class="t" style="left:162.00px;top:448.22px;font-size:11.5px;line-height:14px;color:#000;letter-spacing:0.017px;">System Config</span>
<span class="t" style="left:162.00px;top:472.22px;font-size:11.5px;line-height:14px;color:#000;letter-spacing:0.345px;">Distance</span>
<span class="t" style="left:162.00px;top:496.22px;font-size:11.5px;line-height:14px;color:#000;letter-spacing:0.118px;">Overcurrent</span>
<span class="t" style="left:108.70px;top:520.22px;font-size:11.5px;line-height:14px;color:#000;letter-spacing:-0.172px;">Bay</span>
<span class="t" style="left:135.00px;top:544.22px;font-size:11.5px;line-height:14px;color:#000;letter-spacing:0.232px;">GE Multilin G60</span>
<span class="t" style="left:162.00px;top:568.22px;font-size:11.5px;line-height:14px;color:#000;letter-spacing:0.017px;">System Config</span>
<span class="t" style="left:162.00px;top:592.22px;font-size:11.5px;line-height:14px;color:#000;letter-spacing:0.729px;">Differential</span>
<span class="t" style="left:162.00px;top:616.22px;font-size:11.5px;line-height:14px;color:#000;letter-spacing:0.118px;">Overcurrent</span>
<span class="t" style="left:108.70px;top:640.22px;font-size:11.5px;line-height:14px;color:#000;letter-spacing:-0.172px;">Bay</span>
<span class="t" style="left:135.00px;top:664.22px;font-size:11.5px;line-height:14px;color:#000;letter-spacing:0.202px;">GE Multilin L90</span>
<span class="t" style="left:162.00px;top:688.22px;font-size:11.5px;line-height:14px;color:#000;letter-spacing:0.017px;">System Config</span>
<span class="t" style="left:162.00px;top:712.22px;font-size:11.5px;line-height:14px;color:#000;letter-spacing:0.729px;">Differential</span>
<span class="t" style="left:162.00px;top:736.22px;font-size:11.5px;line-height:14px;color:#000;letter-spacing:0.118px;">Overcurrent</span>
<span class="t" style="left:162.00px;top:760.22px;font-size:11.5px;line-height:14px;color:#000;letter-spacing:0.345px;">Distance</span>
<span class="t" style="left:108.70px;top:784.22px;font-size:11.5px;line-height:14px;color:#000;letter-spacing:-0.172px;">Bay</span>
<span class="t" style="left:135.00px;top:808.22px;font-size:11.5px;line-height:14px;color:#000;letter-spacing:-0.122px;">Schneider P441/P442/P444</span>
<span class="t" style="left:162.00px;top:832.22px;font-size:11.5px;line-height:14px;color:#000;letter-spacing:0.017px;">System Config</span>
<span class="t" style="left:162.00px;top:856.22px;font-size:11.5px;line-height:14px;color:#000;letter-spacing:0.345px;">Distance</span>
<span class="t" style="left:162.00px;top:880.22px;font-size:11.5px;line-height:14px;color:#000;letter-spacing:0.118px;">Overcurrent</span>
<div style="left:299px;top:129px;width:814px;height:882px;background:#f0f0f0"></div>
<div style="left:1113px;top:129px;width:4px;height:882px;background:#f0f0f0"></div>
<div style="left:299px;top:129px;width:814px;height:24px;background:#455a64"></div>
<span class="t" style="left:305.00px;top:133.22px;font-size:11.5px;line-height:14px;color:#fff;letter-spacing:0.222px;">Test View</span>
<div style="left:1088px;top:132px;width:18px;height:18px;border:1.3px solid #fff;box-sizing:border-box"></div>
<div style="left:300px;top:174.5px;width:810.5px;height:835.5px;background:#fff;border:1px solid #e3e3e3;border-top:none;box-sizing:border-box"></div>
<div style="left:300px;top:174px;width:810.5px;height:1px;background:#e3e3e3"></div>
<div style="left:301.3px;top:155px;width:59.1px;height:19.5px;background:#f0f0f0;border:1px solid #dadada;border-bottom:none;box-sizing:border-box"></div>
<span class="t" style="left:306.50px;top:158.22px;font-size:11.5px;line-height:14px;color:#000;letter-spacing:0.196px;">Shot Test</span>
<div style="left:436px;top:155px;width:92.5px;height:19.5px;background:#f0f0f0;border:1px solid #dadada;border-bottom:none;box-sizing:border-box"></div>
<span class="t" style="left:441.00px;top:158.22px;font-size:11.5px;line-height:14px;color:#000;letter-spacing:0.217px;">Test Parameter</span>
<div style="left:527.5px;top:155px;width:83.5px;height:19.5px;background:#f0f0f0;border:1px solid #dadada;border-bottom:none;box-sizing:border-box"></div>
<span class="t" style="left:534.00px;top:158.22px;font-size:11.5px;line-height:14px;color:#000;letter-spacing:0.202px;">Binary setting</span>
<div style="left:360.4px;top:153.5px;width:75.6px;height:22px;background:#fff;border-left:1px solid #e3e3e3;border-right:1px solid #e3e3e3;box-sizing:border-box"></div>
<span class="t" style="left:367.50px;top:156.22px;font-size:11.5px;line-height:14px;color:#000;letter-spacing:0.090px;">Search Test</span>
<div style="left:306px;top:186px;width:800px;height:371px;border:1px solid #dcdcdc;box-sizing:border-box"></div>
<div style="left:312px;top:180px;width:89px;height:12px;background:#fff"></div>
<span class="t" style="left:314.70px;top:179.22px;font-size:11.5px;line-height:14px;color:#000;letter-spacing:0.217px;">Set Origin Point</span>
<span class="t" style="left:340.60px;top:206.89px;font-size:11px;line-height:13px;color:#000;letter-spacing:0.688px;">|Z|</span>
<div style="left:361px;top:200px;width:77.5px;height:21.5px;background:#fff;border:1px solid #7a7a7a;box-sizing:border-box"></div>
<span class="t" style="left:363.80px;top:203.22px;font-size:11.5px;line-height:14px;color:#000;letter-spacing:-0.436px;">5.815Ω</span>
<span class="t" style="left:448.00px;top:206.89px;font-size:11px;line-height:13px;color:#000;">R</span>
<div style="left:458px;top:200px;width:78px;height:21.5px;background:#fff;border:1px solid #7a7a7a;box-sizing:border-box"></div>
<span class="t" style="left:460.80px;top:203.22px;font-size:11.5px;line-height:14px;color:#000;letter-spacing:-0.436px;">0.997Ω</span>
<span class="t" style="left:338.00px;top:244.22px;font-size:11.5px;line-height:14px;color:#000;letter-spacing:-0.040px;">Phi</span>
<div style="left:361px;top:240px;width:77.5px;height:21.5px;background:#fff;border:1px solid #7a7a7a;box-sizing:border-box"></div>
<span class="t" style="left:363.80px;top:243.22px;font-size:11.5px;line-height:14px;color:#000;letter-spacing:-0.398px;">80.126°</span>
<span class="t" style="left:448.00px;top:246.89px;font-size:11px;line-height:13px;color:#000;">X</span>
<div style="left:458px;top:240px;width:78px;height:21.5px;background:#fff;border:1px solid #7a7a7a;box-sizing:border-box"></div>
<span class="t" style="left:460.80px;top:243.22px;font-size:11.5px;line-height:14px;color:#000;letter-spacing:-0.436px;">5.729Ω</span>
<span class="t" style="left:578.00px;top:206.22px;font-size:11.5px;line-height:14px;color:#000;letter-spacing:0.081px;">Line Length</span>
<div style="left:645px;top:202px;width:78px;height:21.7px;background:#fff;border:1px solid #7a7a7a;box-sizing:border-box"></div>
<span class="t" style="left:647.80px;top:205.22px;font-size:11.5px;line-height:14px;color:#000;letter-spacing:-0.438px;">40.000Ω</span>
<span class="t" style="left:583.00px;top:246.22px;font-size:11.5px;line-height:14px;color:#000;letter-spacing:0.229px;">Line Angle</span>
<div style="left:645px;top:242px;width:78px;height:21.7px;background:#fff;border:1px solid #7a7a7a;box-sizing:border-box"></div>
<span class="t" style="left:647.80px;top:245.22px;font-size:11.5px;line-height:14px;color:#000;letter-spacing:-0.404px;">330.000°</span>
<span class="t" style="left:590.20px;top:284.22px;font-size:11.5px;line-height:14px;color:#000;letter-spacing:0.189px;">Precision</span>
<div style="left:645px;top:281px;width:78px;height:21.8px;background:#fff;border:1px solid #7a7a7a;box-sizing:border-box"></div>
<span class="t" style="left:647.80px;top:284.22px;font-size:11.5px;line-height:14px;color:#000;letter-spacing:-0.436px;">0.010Ω</span>
<div style="left:339px;top:272px;width:22px;height:22px;border:1.3px solid #5fd6dc;box-sizing:border-box;background:#fff"></div>
<div style="left:342.5px;top:275.5px;width:15px;height:15px;background:#e8e7f9;box-shadow:0 0 1.500px 1px #eeeefb"></div>
<span class="t" style="left:364.70px;top:277.89px;font-size:11px;line-height:13px;color:#000;letter-spacing:0.139px;">Ignore Nominal Characteris</span>
<div style="left:731px;top:193.3px;width:81px;height:29.5px;background:#e1e1e1;border:1px solid #adadad;box-sizing:border-box"></div>
<span class="t" style="left:759.90px;top:201.22px;font-size:11.5px;line-height:14px;color:#000;letter-spacing:0.180px;">Add</span>
<div style="left:731px;top:230.3px;width:81px;height:29.5px;background:#e1e1e1;border:1px solid #adadad;box-sizing:border-box"></div>
<span class="t" style="left:739.90px;top:238.22px;font-size:11.5px;line-height:14px;color:#000;letter-spacing:0.290px;">Add Multi...</span>
<div style="left:731px;top:266.1px;width:81px;height:29.5px;background:#e1e1e1;border:1px solid #adadad;box-sizing:border-box"></div>
<span class="t" style="left:743.90px;top:274.22px;font-size:11.5px;line-height:14px;color:#000;letter-spacing:0.151px;">Sequence</span>
<div style="left:731px;top:303.3px;width:81px;height:29.5px;background:#e1e1e1;border:1px solid #adadad;box-sizing:border-box"></div>
<span class="t" style="left:749.15px;top:311.22px;font-size:11.5px;line-height:14px;color:#000;letter-spacing:-0.053px;">Remove</span>
<div style="left:731px;top:339.5px;width:81px;height:29.5px;background:#e1e1e1;border:1px solid #adadad;box-sizing:border-box"></div>
<span class="t" style="left:740.15px;top:347.22px;font-size:11.5px;line-height:14px;color:#000;letter-spacing:0.234px;">Remove All</span>
<div style="left:731px;top:379.2px;width:81px;height:29.5px;background:#e1e1e1;border:1px solid #adadad;box-sizing:border-box"></div>
<span class="t" style="left:754.65px;top:387.22px;font-size:11.5px;line-height:14px;color:#000;letter-spacing:-0.219px;">Check</span>
<div style="left:316.3px;top:423.5px;width:407.5px;height:125px;border:1px solid #dcdcdc;box-sizing:border-box"></div>
<div style="left:322px;top:417px;width:58px;height:12px;background:#fff"></div>
<span class="t" style="left:325.30px;top:416.89px;font-size:11px;line-height:13px;color:#000;letter-spacing:0.356px;">FaultType</span>
<div style="left:327px;top:440px;width:21px;height:21px;border-radius:50%;border:1.3px solid #4fd2d8;box-sizing:border-box;background:#fff"></div>
<div style="left:330.5px;top:443.5px;width:14px;height:14px;border-radius:50%;background:radial-gradient(circle at 35% 65%,#29b6f6 0%,#4fc3f7 55%,#9adcfb 100%)"></div>
<span class="t" style="left:352.10px;top:444.89px;font-size:11px;line-height:13px;color:#000;letter-spacing:-0.189px;">A-N</span>
<div style="left:415.1px;top:440px;width:21px;height:21px;border-radius:50%;border:1.3px solid #4fd2d8;box-sizing:border-box;background:#fff"></div>
<div style="left:418.6px;top:443.5px;width:14px;height:14px;border-radius:50%;background:radial-gradient(circle,#e9e8f9 0%,#ebeafa 60%,#f6f6fd 100%)"></div>
<span class="t" style="left:440.20px;top:444.89px;font-size:11px;line-height:13px;color:#000;letter-spacing:-0.183px;">A-B</span>
<div style="left:502px;top:440px;width:21px;height:21px;border-radius:50%;border:1.3px solid #4fd2d8;box-sizing:border-box;background:#fff"></div>
<div style="left:505.5px;top:443.5px;width:14px;height:14px;border-radius:50%;background:radial-gradient(circle,#e9e8f9 0%,#ebeafa 60%,#f6f6fd 100%)"></div>
<span class="t" style="left:527.10px;top:444.89px;font-size:11px;line-height:13px;color:#000;letter-spacing:-0.180px;">A-B-C</span>
<div style="left:589px;top:440px;width:21px;height:21px;border-radius:50%;border:1.3px solid #4fd2d8;box-sizing:border-box;background:#fff"></div>
<div style="left:592.5px;top:443.5px;width:14px;height:14px;border-radius:50%;background:radial-gradient(circle,#e9e8f9 0%,#ebeafa 60%,#f6f6fd 100%)"></div>
<span class="t" style="left:614.10px;top:444.89px;font-size:11px;line-height:13px;color:#000;letter-spacing:-0.180px;">A-B-N</span>
<div style="left:327px;top:474.2px;width:21px;height:21px;border-radius:50%;border:1.3px solid #4fd2d8;box-sizing:border-box;background:#fff"></div>
<div style="left:330.5px;top:477.7px;width:14px;height:14px;border-radius:50%;background:radial-gradient(circle,#e9e8f9 0%,#ebeafa 60%,#f6f6fd 100%)"></div>
<span class="t" style="left:352.10px;top:478.89px;font-size:11px;line-height:13px;color:#000;letter-spacing:-0.189px;">B-N</span>
<div style="left:415.1px;top:474.2px;width:21px;height:21px;border-radius:50%;border:1.3px solid #4fd2d8;box-sizing:border-box;background:#fff"></div>
<div style="left:418.6px;top:477.7px;width:14px;height:14px;border-radius:50%;background:radial-gradient(circle,#e9e8f9 0%,#ebeafa 60%,#f6f6fd 100%)"></div>
<span class="t" style="left:440.20px;top:478.89px;font-size:11px;line-height:13px;color:#000;letter-spacing:-0.189px;">B-C</span>
<div style="left:589px;top:474.2px;width:21px;height:21px;border-radius:50%;border:1.3px solid #4fd2d8;box-sizing:border-box;background:#fff"></div>
<div style="left:592.5px;top:477.7px;width:14px;height:14px;border-radius:50%;background:radial-gradient(circle,#e9e8f9 0%,#ebeafa 60%,#f6f6fd 100%)"></div>
<span class="t" style="left:614.10px;top:478.89px;font-size:11px;line-height:13px;color:#000;letter-spacing:-0.183px;">B-C-N</span>
<div style="left:327px;top:508.9px;width:21px;height:21px;border-radius:50%;border:1.3px solid #4fd2d8;box-sizing:border-box;background:#fff"></div>
<div style="left:330.5px;top:512.4px;width:14px;height:14px;border-radius:50%;background:radial-gradient(circle,#e9e8f9 0%,#ebeafa 60%,#f6f6fd 100%)"></div>
<span class="t" style="left:352.10px;top:513.89px;font-size:11px;line-height:13px;color:#000;letter-spacing:-0.196px;">C-N</span>
<div style="left:415.1px;top:508.9px;width:21px;height:21px;border-radius:50%;border:1.3px solid #4fd2d8;box-sizing:border-box;background:#fff"></div>
<div style="left:418.6px;top:512.4px;width:14px;height:14px;border-radius:50%;background:radial-gradient(circle,#e9e8f9 0%,#ebeafa 60%,#f6f6fd 100%)"></div>
<span class="t" style="left:440.20px;top:513.89px;font-size:11px;line-height:13px;color:#000;letter-spacing:-0.189px;">C-A</span>
<div style="left:589px;top:508.9px;width:21px;height:21px;border-radius:50%;border:1.3px solid #4fd2d8;box-sizing:border-box;background:#fff"></div>
<div style="left:592.5px;top:512.4px;width:14px;height:14px;border-radius:50%;background:radial-gradient(circle,#e9e8f9 0%,#ebeafa 60%,#f6f6fd 100%)"></div>
<span class="t" style="left:614.10px;top:513.89px;font-size:11px;line-height:13px;color:#000;letter-spacing:-0.183px;">C-A-N</span>
<div style="left:306px;top:558px;width:783px;height:429px;overflow:hidden;background:#fff;border-left:1px solid #8c8c8c;border-top:1px solid #8c8c8c;box-sizing:border-box"><div style="left:21px;top:20px;width:762px;height:408px;background:#f0f0f0"></div>
<div style="left:21px;top:135px;width:762px;height:23px;background:#0078d7"></div>
<div style="left:0px;top:136px;width:21px;height:22px;background:#b9d9f4"></div>
<svg style="left:4.5px;top:142px;width:8px;height:10px" viewBox="0 0 8 10"><path d="M1 .5L6.500 5L1 9.500z" fill="#222"/></svg>
<div style="left:21px;top:0px;width:1px;height:20px;background:#e4e4e4"></div>
<div style="left:46px;top:0px;width:1px;height:20px;background:#e4e4e4"></div>
<div style="left:111px;top:0px;width:1px;height:20px;background:#e4e4e4"></div>
<div style="left:181px;top:0px;width:1px;height:20px;background:#e4e4e4"></div>
<div style="left:246px;top:0px;width:1px;height:20px;background:#e4e4e4"></div>
<div style="left:366px;top:0px;width:1px;height:20px;background:#e4e4e4"></div>
<div style="left:444px;top:0px;width:1px;height:20px;background:#e4e4e4"></div>
<div style="left:522px;top:0px;width:1px;height:20px;background:#e4e4e4"></div>
<div style="left:587px;top:0px;width:1px;height:20px;background:#e4e4e4"></div>
<div style="left:652px;top:0px;width:1px;height:20px;background:#e4e4e4"></div>
<div style="left:722px;top:0px;width:1px;height:20px;background:#e4e4e4"></div>
<div style="left:0px;top:20px;width:21px;height:1px;background:#e4e4e4"></div>
<div style="left:0px;top:43px;width:21px;height:1px;background:#e4e4e4"></div>
<div style="left:0px;top:66px;width:21px;height:1px;background:#e4e4e4"></div>
<div style="left:0px;top:89px;width:21px;height:1px;background:#e4e4e4"></div>
<div style="left:0px;top:112px;width:21px;height:1px;background:#e4e4e4"></div>
<div style="left:0px;top:135px;width:21px;height:1px;background:#e4e4e4"></div>
<div style="left:0px;top:158px;width:21px;height:1px;background:#e4e4e4"></div>
<div style="left:0px;top:181px;width:21px;height:1px;background:#e4e4e4"></div>
<div style="left:0px;top:204px;width:21px;height:1px;background:#e4e4e4"></div>
<div style="left:0px;top:227px;width:21px;height:1px;background:#e4e4e4"></div>
<div style="left:0px;top:250px;width:21px;height:1px;background:#e4e4e4"></div>
<div style="left:0px;top:273px;width:21px;height:1px;background:#e4e4e4"></div>
<div style="left:0px;top:296px;width:21px;height:1px;background:#e4e4e4"></div>
<div style="left:0px;top:319px;width:21px;height:1px;background:#e4e4e4"></div>
<div style="left:0px;top:342px;width:21px;height:1px;background:#e4e4e4"></div>
<div style="left:0px;top:365px;width:21px;height:1px;background:#e4e4e4"></div>
<div style="left:0px;top:388px;width:21px;height:1px;background:#e4e4e4"></div>
<div style="left:0px;top:411px;width:21px;height:1px;background:#e4e4e4"></div>
<div style="left:0px;top:434px;width:21px;height:1px;background:#e4e4e4"></div>
<div style="left:21px;top:20px;width:1px;height:408px;background:#a0a0a0"></div>
<div style="left:46px;top:20px;width:1px;height:408px;background:#a0a0a0"></div>
<div style="left:111px;top:20px;width:1px;height:408px;background:#a0a0a0"></div>
<div style="left:181px;top:20px;width:1px;height:408px;background:#a0a0a0"></div>
<div style="left:246px;top:20px;width:1px;height:408px;background:#a0a0a0"></div>
<div style="left:366px;top:20px;width:1px;height:408px;background:#a0a0a0"></div>
<div style="left:444px;top:20px;width:1px;height:408px;background:#a0a0a0"></div>
<div style="left:522px;top:20px;width:1px;height:408px;background:#a0a0a0"></div>
<div style="left:587px;top:20px;width:1px;height:408px;background:#a0a0a0"></div>
<div style="left:652px;top:20px;width:1px;height:408px;background:#a0a0a0"></div>
<div style="left:722px;top:20px;width:1px;height:408px;background:#a0a0a0"></div>
<div style="left:782px;top:20px;width:1px;height:408px;background:#a0a0a0"></div>
<div style="left:21px;top:20px;width:762px;height:1px;background:#a0a0a0"></div>
<div style="left:21px;top:43px;width:762px;height:1px;background:#a0a0a0"></div>
<div style="left:21px;top:66px;width:762px;height:1px;background:#a0a0a0"></div>
<div style="left:21px;top:89px;width:762px;height:1px;background:#a0a0a0"></div>
<div style="left:21px;top:112px;width:762px;height:1px;background:#a0a0a0"></div>
<div style="left:21px;top:135px;width:762px;height:1px;background:#a0a0a0"></div>
<div style="left:21px;top:158px;width:762px;height:1px;background:#a0a0a0"></div>
<div style="left:21px;top:181px;width:762px;height:1px;background:#a0a0a0"></div>
<div style="left:21px;top:204px;width:762px;height:1px;background:#a0a0a0"></div>
<div style="left:21px;top:227px;width:762px;height:1px;background:#a0a0a0"></div>
<div style="left:21px;top:250px;width:762px;height:1px;background:#a0a0a0"></div>
<div style="left:21px;top:273px;width:762px;height:1px;background:#a0a0a0"></div>
<div style="left:21px;top:296px;width:762px;height:1px;background:#a0a0a0"></div>
<div style="left:21px;top:319px;width:762px;height:1px;background:#a0a0a0"></div>
<div style="left:21px;top:342px;width:762px;height:1px;background:#a0a0a0"></div>
<div style="left:21px;top:365px;width:762px;height:1px;background:#a0a0a0"></div>
<div style="left:21px;top:388px;width:762px;height:1px;background:#a0a0a0"></div>
<div style="left:21px;top:411px;width:762px;height:1px;background:#a0a0a0"></div>
<div style="left:21px;top:434px;width:762px;height:1px;background:#a0a0a0"></div>
<span class="t" style="left:71.75px;top:3.22px;font-size:11.5px;line-height:14px;color:#000;letter-spacing:0.500px;">|Z|</span>
<span class="t" style="left:138.50px;top:3.22px;font-size:11.5px;line-height:14px;color:#000;letter-spacing:0.126px;">Phi</span>
<span class="t" style="left:201.75px;top:3.22px;font-size:11.5px;line-height:14px;color:#000;letter-spacing:0.143px;">Type</span>
<span class="t" style="left:295.50px;top:3.22px;font-size:11.5px;line-height:14px;color:#000;letter-spacing:0.247px;">% of</span>
<span class="t" style="left:376.50px;top:3.22px;font-size:11.5px;line-height:14px;color:#000;letter-spacing:0.209px;">LineLength</span>
<span class="t" style="left:456.25px;top:3.22px;font-size:11.5px;line-height:14px;color:#000;letter-spacing:0.372px;">LineAngle</span>
<span class="t" style="left:539.00px;top:3.22px;font-size:11.5px;line-height:14px;color:#000;letter-spacing:0.221px;">T. Out</span>
<span class="t" style="left:606.25px;top:3.22px;font-size:11.5px;line-height:14px;color:#000;letter-spacing:0.170px;">T. act</span>
<span class="t" style="left:665.25px;top:3.22px;font-size:11.5px;line-height:14px;color:#000;letter-spacing:0.559px;">Act.(|Z|)</span>
<span class="t" style="left:746.00px;top:3.22px;font-size:11.5px;line-height:14px;color:#000;letter-spacing:-0.158px;">Act. (°)</span>
<span class="t" style="left:24.80px;top:25.22px;font-size:11.5px;line-height:14px;color:#000;">1</span>
<span class="t" style="left:49.80px;top:25.22px;font-size:11.5px;line-height:14px;color:#000;letter-spacing:-0.436px;">2.075Ω</span>
<span class="t" style="left:114.80px;top:25.22px;font-size:11.5px;line-height:14px;color:#000;letter-spacing:-0.404px;">165.360°</span>
<span class="t" style="left:184.80px;top:25.22px;font-size:11.5px;line-height:14px;color:#000;letter-spacing:-0.435px;">A-N</span>
<span class="t" style="left:249.80px;top:25.22px;font-size:11.5px;line-height:14px;color:#000;letter-spacing:0.127px;">Zone 1 Ground</span>
<span class="t" style="left:369.80px;top:25.22px;font-size:11.5px;line-height:14px;color:#000;letter-spacing:-0.436px;">1.037Ω</span>
<span class="t" style="left:447.80px;top:25.22px;font-size:11.5px;line-height:14px;color:#000;letter-spacing:-0.404px;">240.000°</span>
<span class="t" style="left:525.80px;top:25.22px;font-size:11.5px;line-height:14px;color:#000;letter-spacing:-0.032px;">75.00ms</span>
<span class="t" style="left:590.80px;top:25.22px;font-size:11.5px;line-height:14px;color:#000;letter-spacing:0.004px;">---</span>
<span class="t" style="left:655.80px;top:25.22px;font-size:11.5px;line-height:14px;color:#000;letter-spacing:0.276px;">N/A</span>
<span class="t" style="left:725.80px;top:25.22px;font-size:11.5px;line-height:14px;color:#000;letter-spacing:0.276px;">N/A</span>
<span class="t" style="left:24.80px;top:48.22px;font-size:11.5px;line-height:14px;color:#000;">2</span>
<span class="t" style="left:49.80px;top:48.22px;font-size:11.5px;line-height:14px;color:#000;letter-spacing:-0.436px;">6.351Ω</span>
<span class="t" style="left:114.80px;top:48.22px;font-size:11.5px;line-height:14px;color:#000;letter-spacing:-0.404px;">165.360°</span>
<span class="t" style="left:184.80px;top:48.22px;font-size:11.5px;line-height:14px;color:#000;letter-spacing:-0.435px;">A-N</span>
<span class="t" style="left:249.80px;top:48.22px;font-size:11.5px;line-height:14px;color:#000;letter-spacing:0.127px;">Zone 1 Ground</span>
<span class="t" style="left:369.80px;top:48.22px;font-size:11.5px;line-height:14px;color:#000;letter-spacing:-0.436px;">1.423Ω</span>
<span class="t" style="left:447.80px;top:48.22px;font-size:11.5px;line-height:14px;color:#000;letter-spacing:-0.404px;">210.000°</span>
<span class="t" style="left:525.80px;top:48.22px;font-size:11.5px;line-height:14px;color:#000;letter-spacing:-0.032px;">75.00ms</span>
<span class="t" style="left:590.80px;top:48.22px;font-size:11.5px;line-height:14px;color:#000;letter-spacing:0.004px;">---</span>
<span class="t" style="left:655.80px;top:48.22px;font-size:11.5px;line-height:14px;color:#000;letter-spacing:0.276px;">N/A</span>
<span class="t" style="left:725.80px;top:48.22px;font-size:11.5px;line-height:14px;color:#000;letter-spacing:0.276px;">N/A</span>
<span class="t" style="left:24.80px;top:71.22px;font-size:11.5px;line-height:14px;color:#000;">3</span>
<span class="t" style="left:49.80px;top:71.22px;font-size:11.5px;line-height:14px;color:#000;letter-spacing:-0.436px;">9.771Ω</span>
<span class="t" style="left:114.80px;top:71.22px;font-size:11.5px;line-height:14px;color:#000;letter-spacing:-0.404px;">144.103°</span>
<span class="t" style="left:184.80px;top:71.22px;font-size:11.5px;line-height:14px;color:#000;letter-spacing:-0.435px;">A-N</span>
<span class="t" style="left:249.80px;top:71.22px;font-size:11.5px;line-height:14px;color:#000;letter-spacing:0.127px;">Zone 1 Ground</span>
<span class="t" style="left:369.80px;top:71.22px;font-size:11.5px;line-height:14px;color:#000;letter-spacing:-0.436px;">1.064Ω</span>
<span class="t" style="left:447.80px;top:71.22px;font-size:11.5px;line-height:14px;color:#000;letter-spacing:-0.404px;">180.000°</span>
<span class="t" style="left:525.80px;top:71.22px;font-size:11.5px;line-height:14px;color:#000;letter-spacing:-0.032px;">75.00ms</span>
<span class="t" style="left:590.80px;top:71.22px;font-size:11.5px;line-height:14px;color:#000;letter-spacing:0.004px;">---</span>
<span class="t" style="left:655.80px;top:71.22px;font-size:11.5px;line-height:14px;color:#000;letter-spacing:0.276px;">N/A</span>
<span class="t" style="left:725.80px;top:71.22px;font-size:11.5px;line-height:14px;color:#000;letter-spacing:0.276px;">N/A</span>
<span class="t" style="left:24.80px;top:94.22px;font-size:11.5px;line-height:14px;color:#000;">4</span>
<span class="t" style="left:49.80px;top:94.22px;font-size:11.5px;line-height:14px;color:#000;letter-spacing:-0.438px;">18.809Ω</span>
<span class="t" style="left:114.80px;top:94.22px;font-size:11.5px;line-height:14px;color:#000;letter-spacing:-0.404px;">162.267°</span>
<span class="t" style="left:184.80px;top:94.22px;font-size:11.5px;line-height:14px;color:#000;letter-spacing:-0.435px;">A-N</span>
<span class="t" style="left:249.80px;top:94.22px;font-size:11.5px;line-height:14px;color:#000;letter-spacing:0.127px;">Zone 2 Ground</span>
<span class="t" style="left:369.80px;top:94.22px;font-size:11.5px;line-height:14px;color:#000;letter-spacing:-0.436px;">2.128Ω</span>
<span class="t" style="left:447.80px;top:94.22px;font-size:11.5px;line-height:14px;color:#000;letter-spacing:-0.404px;">180.000°</span>
<span class="t" style="left:525.80px;top:94.22px;font-size:11.5px;line-height:14px;color:#000;letter-spacing:-0.032px;">275.00ms</span>
<span class="t" style="left:590.80px;top:94.22px;font-size:11.5px;line-height:14px;color:#000;letter-spacing:0.004px;">---</span>
<span class="t" style="left:655.80px;top:94.22px;font-size:11.5px;line-height:14px;color:#000;letter-spacing:0.276px;">N/A</span>
<span class="t" style="left:725.80px;top:94.22px;font-size:11.5px;line-height:14px;color:#000;letter-spacing:0.276px;">N/A</span>
<span class="t" style="left:24.80px;top:117.22px;font-size:11.5px;line-height:14px;color:#000;">5</span>
<span class="t" style="left:49.80px;top:117.22px;font-size:11.5px;line-height:14px;color:#000;letter-spacing:-0.438px;">22.666Ω</span>
<span class="t" style="left:114.80px;top:117.22px;font-size:11.5px;line-height:14px;color:#000;letter-spacing:-0.404px;">165.360°</span>
<span class="t" style="left:184.80px;top:117.22px;font-size:11.5px;line-height:14px;color:#000;letter-spacing:-0.435px;">A-N</span>
<span class="t" style="left:249.80px;top:117.22px;font-size:11.5px;line-height:14px;color:#000;letter-spacing:0.127px;">Zone 3 Ground</span>
<span class="t" style="left:369.80px;top:117.22px;font-size:11.5px;line-height:14px;color:#000;letter-spacing:-0.429px;">11.860Ω</span>
<span class="t" style="left:447.80px;top:117.22px;font-size:11.5px;line-height:14px;color:#000;letter-spacing:-0.404px;">180.000°</span>
<span class="t" style="left:525.80px;top:117.22px;font-size:11.5px;line-height:14px;color:#000;letter-spacing:-0.032px;">675.00ms</span>
<span class="t" style="left:590.80px;top:117.22px;font-size:11.5px;line-height:14px;color:#000;letter-spacing:0.004px;">---</span>
<span class="t" style="left:655.80px;top:117.22px;font-size:11.5px;line-height:14px;color:#000;letter-spacing:0.276px;">N/A</span>
<span class="t" style="left:725.80px;top:117.22px;font-size:11.5px;line-height:14px;color:#000;letter-spacing:0.276px;">N/A</span>
<span class="t" style="left:24.80px;top:140.22px;font-size:11.5px;line-height:14px;color:#000;">6</span>
<span class="t" style="left:49.80px;top:140.22px;font-size:11.5px;line-height:14px;color:#000;letter-spacing:-0.438px;">10.169Ω</span>
<span class="t" style="left:114.80px;top:140.22px;font-size:11.5px;line-height:14px;color:#000;letter-spacing:-0.389px;">2.473°</span>
<span class="t" style="left:184.80px;top:140.22px;font-size:11.5px;line-height:14px;color:#000;letter-spacing:-0.435px;">A-N</span>
<span class="t" style="left:249.80px;top:140.22px;font-size:11.5px;line-height:14px;color:#000;letter-spacing:0.127px;">Zone 1 Ground</span>
<span class="t" style="left:369.80px;top:140.22px;font-size:11.5px;line-height:14px;color:#000;letter-spacing:-0.436px;">1.015Ω</span>
<span class="t" style="left:447.80px;top:140.22px;font-size:11.5px;line-height:14px;color:#000;letter-spacing:-0.404px;">330.000°</span>
<span class="t" style="left:525.80px;top:140.22px;font-size:11.5px;line-height:14px;color:#000;letter-spacing:-0.032px;">75.00ms</span>
<span class="t" style="left:590.80px;top:140.22px;font-size:11.5px;line-height:14px;color:#000;letter-spacing:0.004px;">---</span>
<span class="t" style="left:655.80px;top:140.22px;font-size:11.5px;line-height:14px;color:#000;letter-spacing:0.276px;">N/A</span>
<span class="t" style="left:725.80px;top:140.22px;font-size:11.5px;line-height:14px;color:#000;letter-spacing:0.276px;">N/A</span>
<span class="t" style="left:24.80px;top:163.22px;font-size:11.5px;line-height:14px;color:#000;">7</span>
<span class="t" style="left:49.80px;top:163.22px;font-size:11.5px;line-height:14px;color:#000;letter-spacing:-0.438px;">18.926Ω</span>
<span class="t" style="left:114.80px;top:163.22px;font-size:11.5px;line-height:14px;color:#000;letter-spacing:-0.381px;">-13.232°</span>
<span class="t" style="left:184.80px;top:163.22px;font-size:11.5px;line-height:14px;color:#000;letter-spacing:-0.435px;">A-N</span>
<span class="t" style="left:249.80px;top:163.22px;font-size:11.5px;line-height:14px;color:#000;letter-spacing:0.127px;">Zone 2 Ground</span>
<span class="t" style="left:369.80px;top:163.22px;font-size:11.5px;line-height:14px;color:#000;letter-spacing:-0.436px;">3.035Ω</span>
<span class="t" style="left:447.80px;top:163.22px;font-size:11.5px;line-height:14px;color:#000;letter-spacing:-0.404px;">330.000°</span>
<span class="t" style="left:525.80px;top:163.22px;font-size:11.5px;line-height:14px;color:#000;letter-spacing:-0.032px;">275.00ms</span>
<span class="t" style="left:590.80px;top:163.22px;font-size:11.5px;line-height:14px;color:#000;letter-spacing:0.004px;">---</span>
<span class="t" style="left:655.80px;top:163.22px;font-size:11.5px;line-height:14px;color:#000;letter-spacing:0.276px;">N/A</span>
<span class="t" style="left:725.80px;top:163.22px;font-size:11.5px;line-height:14px;color:#000;letter-spacing:0.276px;">N/A</span>
<span class="t" style="left:24.80px;top:186.22px;font-size:11.5px;line-height:14px;color:#000;">8</span>
<span class="t" style="left:49.80px;top:186.22px;font-size:11.5px;line-height:14px;color:#000;letter-spacing:-0.438px;">20.613Ω</span>
<span class="t" style="left:114.80px;top:186.22px;font-size:11.5px;line-height:14px;color:#000;letter-spacing:-0.381px;">-14.640°</span>
<span class="t" style="left:184.80px;top:186.22px;font-size:11.5px;line-height:14px;color:#000;letter-spacing:-0.435px;">A-N</span>
<span class="t" style="left:249.80px;top:186.22px;font-size:11.5px;line-height:14px;color:#000;letter-spacing:0.127px;">Zone 3 Ground</span>
<span class="t" style="left:369.80px;top:186.22px;font-size:11.5px;line-height:14px;color:#000;letter-spacing:-0.429px;">11.326Ω</span>
<span class="t" style="left:447.80px;top:186.22px;font-size:11.5px;line-height:14px;color:#000;letter-spacing:-0.404px;">330.000°</span>
<span class="t" style="left:525.80px;top:186.22px;font-size:11.5px;line-height:14px;color:#000;letter-spacing:-0.032px;">675.00ms</span>
<span class="t" style="left:590.80px;top:186.22px;font-size:11.5px;line-height:14px;color:#000;letter-spacing:0.004px;">---</span>
<span class="t" style="left:655.80px;top:186.22px;font-size:11.5px;line-height:14px;color:#000;letter-spacing:0.276px;">N/A</span>
<span class="t" style="left:725.80px;top:186.22px;font-size:11.5px;line-height:14px;color:#000;letter-spacing:0.276px;">N/A</span>
<span class="t" style="left:24.80px;top:209.22px;font-size:11.5px;line-height:14px;color:#000;">9</span>
<span class="t" style="left:49.80px;top:209.22px;font-size:11.5px;line-height:14px;color:#000;letter-spacing:-0.436px;">5.239Ω</span>
<span class="t" style="left:114.80px;top:209.22px;font-size:11.5px;line-height:14px;color:#000;letter-spacing:-0.381px;">-14.640°</span>
<span class="t" style="left:184.80px;top:209.22px;font-size:11.5px;line-height:14px;color:#000;letter-spacing:-0.435px;">A-N</span>
<span class="t" style="left:249.80px;top:209.22px;font-size:11.5px;line-height:14px;color:#000;letter-spacing:0.127px;">Zone 1 Ground</span>
<span class="t" style="left:369.80px;top:209.22px;font-size:11.5px;line-height:14px;color:#000;letter-spacing:-0.436px;">1.405Ω</span>
<span class="t" style="left:447.80px;top:209.22px;font-size:11.5px;line-height:14px;color:#000;letter-spacing:-0.404px;">300.000°</span>
<span class="t" style="left:525.80px;top:209.22px;font-size:11.5px;line-height:14px;color:#000;letter-spacing:-0.032px;">75.00ms</span>
<span class="t" style="left:590.80px;top:209.22px;font-size:11.5px;line-height:14px;color:#000;letter-spacing:0.004px;">---</span>
<span class="t" style="left:655.80px;top:209.22px;font-size:11.5px;line-height:14px;color:#000;letter-spacing:0.276px;">N/A</span>
<span class="t" style="left:725.80px;top:209.22px;font-size:11.5px;line-height:14px;color:#000;letter-spacing:0.276px;">N/A</span>
<span class="t" style="left:24.80px;top:232.22px;font-size:11.5px;line-height:14px;color:#000;letter-spacing:-0.448px;">10</span>
<span class="t" style="left:49.80px;top:232.22px;font-size:11.5px;line-height:14px;color:#000;letter-spacing:-0.436px;">1.031Ω</span>
<span class="t" style="left:114.80px;top:232.22px;font-size:11.5px;line-height:14px;color:#000;letter-spacing:-0.381px;">-14.640°</span>
<span class="t" style="left:184.80px;top:232.22px;font-size:11.5px;line-height:14px;color:#000;letter-spacing:-0.435px;">A-N</span>
<span class="t" style="left:249.80px;top:232.22px;font-size:11.5px;line-height:14px;color:#000;letter-spacing:0.127px;">Zone 1 Ground</span>
<span class="t" style="left:369.80px;top:232.22px;font-size:11.5px;line-height:14px;color:#000;letter-spacing:-0.436px;">1.034Ω</span>
<span class="t" style="left:447.80px;top:232.22px;font-size:11.5px;line-height:14px;color:#000;letter-spacing:-0.404px;">270.000°</span>
<span class="t" style="left:525.80px;top:232.22px;font-size:11.5px;line-height:14px;color:#000;letter-spacing:-0.032px;">75.00ms</span>
<span class="t" style="left:590.80px;top:232.22px;font-size:11.5px;line-height:14px;color:#000;letter-spacing:0.004px;">---</span>
<span class="t" style="left:655.80px;top:232.22px;font-size:11.5px;line-height:14px;color:#000;letter-spacing:0.276px;">N/A</span>
<span class="t" style="left:725.80px;top:232.22px;font-size:11.5px;line-height:14px;color:#000;letter-spacing:0.276px;">N/A</span>
<span class="t" style="left:24.80px;top:255.22px;font-size:11.5px;line-height:14px;color:#000;letter-spacing:-0.418px;">11</span>
<span class="t" style="left:49.80px;top:255.22px;font-size:11.5px;line-height:14px;color:#000;letter-spacing:-0.436px;">9.900Ω</span>
<span class="t" style="left:114.80px;top:255.22px;font-size:11.5px;line-height:14px;color:#000;letter-spacing:-0.398px;">71.660°</span>
<span class="t" style="left:184.80px;top:255.22px;font-size:11.5px;line-height:14px;color:#000;letter-spacing:-0.435px;">A-N</span>
<span class="t" style="left:249.80px;top:255.22px;font-size:11.5px;line-height:14px;color:#000;letter-spacing:0.127px;">Zone 1 Ground</span>
<span class="t" style="left:369.80px;top:255.22px;font-size:11.5px;line-height:14px;color:#000;letter-spacing:-0.436px;">1.155Ω</span>
<span class="t" style="left:447.80px;top:255.22px;font-size:11.5px;line-height:14px;color:#000;letter-spacing:-0.398px;">60.000°</span>
<span class="t" style="left:525.80px;top:255.22px;font-size:11.5px;line-height:14px;color:#000;letter-spacing:-0.032px;">75.00ms</span>
<span class="t" style="left:590.80px;top:255.22px;font-size:11.5px;line-height:14px;color:#000;letter-spacing:0.004px;">---</span>
<span class="t" style="left:655.80px;top:255.22px;font-size:11.5px;line-height:14px;color:#000;letter-spacing:0.276px;">N/A</span>
<span class="t" style="left:725.80px;top:255.22px;font-size:11.5px;line-height:14px;color:#000;letter-spacing:0.276px;">N/A</span>
<span class="t" style="left:24.80px;top:278.22px;font-size:11.5px;line-height:14px;color:#000;letter-spacing:-0.448px;">12</span>
<span class="t" style="left:49.80px;top:278.22px;font-size:11.5px;line-height:14px;color:#000;letter-spacing:-0.438px;">20.643Ω</span>
<span class="t" style="left:114.80px;top:278.22px;font-size:11.5px;line-height:14px;color:#000;letter-spacing:-0.398px;">65.562°</span>
<span class="t" style="left:184.80px;top:278.22px;font-size:11.5px;line-height:14px;color:#000;letter-spacing:-0.435px;">A-N</span>
<span class="t" style="left:249.80px;top:278.22px;font-size:11.5px;line-height:14px;color:#000;letter-spacing:0.127px;">Zone 2 Ground</span>
<span class="t" style="left:369.80px;top:278.22px;font-size:11.5px;line-height:14px;color:#000;letter-spacing:-0.436px;">2.309Ω</span>
<span class="t" style="left:447.80px;top:278.22px;font-size:11.5px;line-height:14px;color:#000;letter-spacing:-0.398px;">60.000°</span>
<span class="t" style="left:525.80px;top:278.22px;font-size:11.5px;line-height:14px;color:#000;letter-spacing:-0.032px;">275.00ms</span>
<span class="t" style="left:590.80px;top:278.22px;font-size:11.5px;line-height:14px;color:#000;letter-spacing:0.004px;">---</span>
<span class="t" style="left:655.80px;top:278.22px;font-size:11.5px;line-height:14px;color:#000;letter-spacing:0.276px;">N/A</span>
<span class="t" style="left:725.80px;top:278.22px;font-size:11.5px;line-height:14px;color:#000;letter-spacing:0.276px;">N/A</span>
<span class="t" style="left:24.80px;top:301.22px;font-size:11.5px;line-height:14px;color:#000;letter-spacing:-0.448px;">13</span>
<span class="t" style="left:49.80px;top:301.22px;font-size:11.5px;line-height:14px;color:#000;letter-spacing:-0.438px;">31.460Ω</span>
<span class="t" style="left:114.80px;top:301.22px;font-size:11.5px;line-height:14px;color:#000;letter-spacing:-0.398px;">63.646°</span>
<span class="t" style="left:184.80px;top:301.22px;font-size:11.5px;line-height:14px;color:#000;letter-spacing:-0.435px;">A-N</span>
<span class="t" style="left:249.80px;top:301.22px;font-size:11.5px;line-height:14px;color:#000;letter-spacing:0.127px;">Zone 3 Ground</span>
<span class="t" style="left:369.80px;top:301.22px;font-size:11.5px;line-height:14px;color:#000;letter-spacing:-0.436px;">3.464Ω</span>
<span class="t" style="left:447.80px;top:301.22px;font-size:11.5px;line-height:14px;color:#000;letter-spacing:-0.398px;">60.000°</span>
<span class="t" style="left:525.80px;top:301.22px;font-size:11.5px;line-height:14px;color:#000;letter-spacing:-0.032px;">675.00ms</span>
<span class="t" style="left:590.80px;top:301.22px;font-size:11.5px;line-height:14px;color:#000;letter-spacing:0.004px;">---</span>
<span class="t" style="left:655.80px;top:301.22px;font-size:11.5px;line-height:14px;color:#000;letter-spacing:0.276px;">N/A</span>
<span class="t" style="left:725.80px;top:301.22px;font-size:11.5px;line-height:14px;color:#000;letter-spacing:0.276px;">N/A</span>
<span class="t" style="left:24.80px;top:324.22px;font-size:11.5px;line-height:14px;color:#000;letter-spacing:-0.448px;">14</span>
<span class="t" style="left:49.80px;top:324.22px;font-size:11.5px;line-height:14px;color:#000;letter-spacing:-0.429px;">11.930Ω</span>
<span class="t" style="left:114.80px;top:324.22px;font-size:11.5px;line-height:14px;color:#000;letter-spacing:-0.398px;">51.967°</span>
<span class="t" style="left:184.80px;top:324.22px;font-size:11.5px;line-height:14px;color:#000;letter-spacing:-0.435px;">A-N</span>
<span class="t" style="left:249.80px;top:324.22px;font-size:11.5px;line-height:14px;color:#000;letter-spacing:0.127px;">Zone 1 Ground</span>
<span class="t" style="left:369.80px;top:324.22px;font-size:11.5px;line-height:14px;color:#000;letter-spacing:-0.436px;">2.000Ω</span>
<span class="t" style="left:447.80px;top:324.22px;font-size:11.5px;line-height:14px;color:#000;letter-spacing:-0.398px;">30.000°</span>
<span class="t" style="left:525.80px;top:324.22px;font-size:11.5px;line-height:14px;color:#000;letter-spacing:-0.032px;">75.00ms</span>
<span class="t" style="left:590.80px;top:324.22px;font-size:11.5px;line-height:14px;color:#000;letter-spacing:0.004px;">---</span>
<span class="t" style="left:655.80px;top:324.22px;font-size:11.5px;line-height:14px;color:#000;letter-spacing:0.276px;">N/A</span>
<span class="t" style="left:725.80px;top:324.22px;font-size:11.5px;line-height:14px;color:#000;letter-spacing:0.276px;">N/A</span>
<span class="t" style="left:24.80px;top:347.22px;font-size:11.5px;line-height:14px;color:#000;letter-spacing:-0.448px;">15</span>
<span class="t" style="left:49.80px;top:347.22px;font-size:11.5px;line-height:14px;color:#000;letter-spacing:-0.438px;">30.190Ω</span>
<span class="t" style="left:114.80px;top:347.22px;font-size:11.5px;line-height:14px;color:#000;letter-spacing:-0.398px;">38.501°</span>
<span class="t" style="left:184.80px;top:347.22px;font-size:11.5px;line-height:14px;color:#000;letter-spacing:-0.435px;">A-N</span>
<span class="t" style="left:249.80px;top:347.22px;font-size:11.5px;line-height:14px;color:#000;letter-spacing:0.127px;">Zone 2 Ground</span>
<span class="t" style="left:369.80px;top:347.22px;font-size:11.5px;line-height:14px;color:#000;letter-spacing:-0.436px;">4.000Ω</span>
<span class="t" style="left:447.80px;top:347.22px;font-size:11.5px;line-height:14px;color:#000;letter-spacing:-0.398px;">30.000°</span>
<span class="t" style="left:525.80px;top:347.22px;font-size:11.5px;line-height:14px;color:#000;letter-spacing:-0.032px;">275.00ms</span>
<span class="t" style="left:590.80px;top:347.22px;font-size:11.5px;line-height:14px;color:#000;letter-spacing:0.004px;">---</span>
<span class="t" style="left:655.80px;top:347.22px;font-size:11.5px;line-height:14px;color:#000;letter-spacing:0.276px;">N/A</span>
<span class="t" style="left:725.80px;top:347.22px;font-size:11.5px;line-height:14px;color:#000;letter-spacing:0.276px;">N/A</span>
<span class="t" style="left:24.80px;top:370.22px;font-size:11.5px;line-height:14px;color:#000;letter-spacing:-0.448px;">16</span>
<span class="t" style="left:49.80px;top:370.22px;font-size:11.5px;line-height:14px;color:#000;letter-spacing:-0.438px;">13.374Ω</span>
<span class="t" style="left:114.80px;top:370.22px;font-size:11.5px;line-height:14px;color:#000;letter-spacing:-0.398px;">25.363°</span>
<span class="t" style="left:184.80px;top:370.22px;font-size:11.5px;line-height:14px;color:#000;letter-spacing:-0.435px;">A-N</span>
<span class="t" style="left:249.80px;top:370.22px;font-size:11.5px;line-height:14px;color:#000;letter-spacing:0.127px;">Zone 1 Ground</span>
<span class="t" style="left:369.80px;top:370.22px;font-size:11.5px;line-height:14px;color:#000;letter-spacing:-0.436px;">1.064Ω</span>
<span class="t" style="left:447.80px;top:370.22px;font-size:11.5px;line-height:14px;color:#000;letter-spacing:-0.389px;">0.000°</span>
<span class="t" style="left:525.80px;top:370.22px;font-size:11.5px;line-height:14px;color:#000;letter-spacing:-0.032px;">75.00ms</span>
<span class="t" style="left:590.80px;top:370.22px;font-size:11.5px;line-height:14px;color:#000;letter-spacing:0.004px;">---</span>
<span class="t" style="left:655.80px;top:370.22px;font-size:11.5px;line-height:14px;color:#000;letter-spacing:0.276px;">N/A</span>
<span class="t" style="left:725.80px;top:370.22px;font-size:11.5px;line-height:14px;color:#000;letter-spacing:0.276px;">N/A</span>
<span class="t" style="left:24.80px;top:393.22px;font-size:11.5px;line-height:14px;color:#000;letter-spacing:-0.448px;">17</span>
<span class="t" style="left:49.80px;top:393.22px;font-size:11.5px;line-height:14px;color:#000;letter-spacing:-0.438px;">22.816Ω</span>
<span class="t" style="left:114.80px;top:393.22px;font-size:11.5px;line-height:14px;color:#000;letter-spacing:-0.398px;">14.542°</span>
<span class="t" style="left:184.80px;top:393.22px;font-size:11.5px;line-height:14px;color:#000;letter-spacing:-0.435px;">A-N</span>
<span class="t" style="left:249.80px;top:393.22px;font-size:11.5px;line-height:14px;color:#000;letter-spacing:0.127px;">Zone 2 Ground</span>
<span class="t" style="left:369.80px;top:393.22px;font-size:11.5px;line-height:14px;color:#000;letter-spacing:-0.436px;">2.128Ω</span>
<span class="t" style="left:447.80px;top:393.22px;font-size:11.5px;line-height:14px;color:#000;letter-spacing:-0.389px;">0.000°</span>
<span class="t" style="left:525.80px;top:393.22px;font-size:11.5px;line-height:14px;color:#000;letter-spacing:-0.032px;">275.00ms</span>
<span class="t" style="left:590.80px;top:393.22px;font-size:11.5px;line-height:14px;color:#000;letter-spacing:0.004px;">---</span>
<span class="t" style="left:655.80px;top:393.22px;font-size:11.5px;line-height:14px;color:#000;letter-spacing:0.276px;">N/A</span>
<span class="t" style="left:725.80px;top:393.22px;font-size:11.5px;line-height:14px;color:#000;letter-spacing:0.276px;">N/A</span>
<span class="t" style="left:24.80px;top:416.22px;font-size:11.5px;line-height:14px;color:#000;letter-spacing:-0.448px;">18</span>
<span class="t" style="left:49.80px;top:416.22px;font-size:11.5px;line-height:14px;color:#000;letter-spacing:-0.438px;">32.593Ω</span>
<span class="t" style="left:114.80px;top:416.22px;font-size:11.5px;line-height:14px;color:#000;letter-spacing:-0.398px;">10.124°</span>
<span class="t" style="left:184.80px;top:416.22px;font-size:11.5px;line-height:14px;color:#000;letter-spacing:-0.435px;">A-N</span>
<span class="t" style="left:249.80px;top:416.22px;font-size:11.5px;line-height:14px;color:#000;letter-spacing:0.127px;">Zone 3 Ground</span>
<span class="t" style="left:369.80px;top:416.22px;font-size:11.5px;line-height:14px;color:#000;letter-spacing:-0.436px;">3.193Ω</span>
<span class="t" style="left:447.80px;top:416.22px;font-size:11.5px;line-height:14px;color:#000;letter-spacing:-0.389px;">0.000°</span>
<span class="t" style="left:525.80px;top:416.22px;font-size:11.5px;line-height:14px;color:#000;letter-spacing:-0.032px;">675.00ms</span>
<span class="t" style="left:590.80px;top:416.22px;font-size:11.5px;line-height:14px;color:#000;letter-spacing:0.004px;">---</span>
<span class="t" style="left:655.80px;top:416.22px;font-size:11.5px;line-height:14px;color:#000;letter-spacing:0.276px;">N/A</span>
<span class="t" style="left:725.80px;top:416.22px;font-size:11.5px;line-height:14px;color:#000;letter-spacing:0.276px;">N/A</span></div>
<div style="left:1089px;top:559px;width:17px;height:445px;background:#f0f0f0"></div>
<div style="left:1091px;top:575.5px;width:14px;height:257px;background:#cdcdcd"></div>
<svg style="left:1092.100px;top:563px;width:11px;height:8px" viewBox="0 0 11 8"><path d="M2.600 6.300L5.500 3.200L8.400 6.300" fill="none" stroke="#5a5a5a" stroke-width="1.900"/></svg>
<svg style="left:1092.100px;top:975px;width:11px;height:8px" viewBox="0 0 11 8"><path d="M2.600 2.100L5.500 5.200L8.400 2.100" fill="none" stroke="#5a5a5a" stroke-width="1.900"/></svg>
<div style="left:306px;top:988px;width:800px;height:16px;background:#f0f0f0"></div>
<div style="left:323px;top:988px;width:645px;height:14.5px;background:#cdcdcd"></div>
<svg style="left:310px;top:990px;width:8px;height:11px" viewBox="0 0 8 11"><path d="M6.200 2.700L3 5.600L6.200 8.500" fill="none" stroke="#5a5a5a" stroke-width="1.900"/></svg>
<svg style="left:1076.500px;top:990px;width:8px;height:11px" viewBox="0 0 8 11"><path d="M2.600 2.700L5.800 5.600L2.600 8.500" fill="none" stroke="#5a5a5a" stroke-width="1.900"/></svg>
<div style="left:1117px;top:129px;width:800px;height:281px;background:#f0f0f0"></div>
<div style="left:1117px;top:129px;width:800px;height:24px;background:#455a64"></div>
<span class="t" style="left:1123.00px;top:133.22px;font-size:11.5px;line-height:14px;color:#fff;letter-spacing:-0.047px;">Vector View</span>
<div style="left:1892px;top:132px;width:18px;height:18px;border:1.3px solid #fff;box-sizing:border-box"></div>
<div style="left:1119px;top:155px;width:50.5px;height:18.5px;background:#f0f0f0;border:1px solid #dadada;border-bottom:none;box-sizing:border-box"></div>
<div style="left:1169.5px;top:153.5px;width:51px;height:22px;background:#fff;border-left:1px solid #e3e3e3;border-right:1px solid #e3e3e3;box-sizing:border-box"></div>
<div style="left:1220px;top:173px;width:282px;height:1px;background:#dcdcdc"></div>
<span class="t" style="left:1125.10px;top:158.22px;font-size:11.5px;line-height:14px;color:#000;letter-spacing:0.324px;">Normal</span>
<span class="t" style="left:1177.40px;top:156.22px;font-size:11.5px;line-height:14px;color:#000;letter-spacing:0.387px;">Fault</span>
<div style="left:1117px;top:175px;width:385px;height:234px;background:#fff;border:1px solid #6f6f6f;box-sizing:border-box;overflow:hidden"><div style="left:4px;top:96px;width:301px;height:53px;background:#d3e4f6"></div>
<div style="left:1px;top:41px;width:1383px;height:1px;background:#ececec"></div>
<div style="left:1px;top:59px;width:1383px;height:1px;background:#ececec"></div>
<div style="left:1px;top:77px;width:1383px;height:1px;background:#ececec"></div>
<div style="left:1px;top:95px;width:1383px;height:1px;background:#ececec"></div>
<div style="left:1px;top:113px;width:1383px;height:1px;background:#ffffff"></div>
<div style="left:1px;top:131px;width:1383px;height:1px;background:#ffffff"></div>
<div style="left:1px;top:149px;width:1383px;height:1px;background:#ececec"></div>
<div style="left:1px;top:167px;width:1383px;height:1px;background:#ececec"></div>
<div style="left:1px;top:185px;width:1383px;height:1px;background:#ececec"></div>
<div style="left:1px;top:203px;width:1383px;height:1px;background:#ececec"></div>
<div style="left:1px;top:221px;width:1383px;height:1px;background:#ececec"></div>
<div style="left:1px;top:239px;width:1383px;height:1px;background:#ececec"></div>
<div style="left:70px;top:0px;width:1px;height:235px;background:#ececec"></div>
<div style="left:145px;top:0px;width:1px;height:235px;background:#ececec"></div>
<div style="left:230px;top:0px;width:1px;height:235px;background:#ececec"></div>
<div style="left:305px;top:0px;width:1px;height:235px;background:#ececec"></div>
<div style="left:70px;top:96px;width:1px;height:53px;background:#fff"></div>
<div style="left:145px;top:96px;width:1px;height:53px;background:#fff"></div>
<div style="left:230px;top:96px;width:1px;height:53px;background:#fff"></div>
<div style="left:4px;top:0px;width:302px;height:23px;background:#fff"></div>
<div style="left:69px;top:2px;width:1px;height:21px;background:linear-gradient(#fff,#e2e2e2 40%,#e2e2e2)"></div>
<div style="left:144px;top:2px;width:1px;height:21px;background:linear-gradient(#fff,#e2e2e2 40%,#e2e2e2)"></div>
<div style="left:229px;top:2px;width:1px;height:21px;background:linear-gradient(#fff,#e2e2e2 40%,#e2e2e2)"></div>
<div style="left:304px;top:2px;width:1px;height:21px;background:linear-gradient(#fff,#e2e2e2 40%,#e2e2e2)"></div>
<span class="t" style="left:6.10px;top:5.22px;font-size:11.5px;line-height:14px;color:#000;letter-spacing:0.347px;">Output</span>
<span class="t" style="left:92.10px;top:5.22px;font-size:11.5px;line-height:14px;color:#000;letter-spacing:0.368px;">Value</span>
<span class="t" style="left:171.20px;top:5.22px;font-size:11.5px;line-height:14px;color:#000;letter-spacing:-0.161px;">Phase</span>
<span class="t" style="left:254.25px;top:5.22px;font-size:11.5px;line-height:14px;color:#000;letter-spacing:-0.068px;">Freq.</span>
<span class="t" style="left:6.10px;top:26.22px;font-size:11.5px;line-height:14px;color:#000;letter-spacing:-0.180px;">V A-N</span>
<span class="t" style="left:86.58px;top:26.22px;font-size:11.5px;line-height:14px;color:#000;letter-spacing:-0.428px;">23.730V</span>
<span class="t" style="left:171.48px;top:26.22px;font-size:11.5px;line-height:14px;color:#000;letter-spacing:-0.389px;">0.000°</span>
<span class="t" style="left:244.55px;top:26.22px;font-size:11.5px;line-height:14px;color:#000;letter-spacing:-0.466px;">50.000Hz</span>
<span class="t" style="left:6.10px;top:44.22px;font-size:11.5px;line-height:14px;color:#000;letter-spacing:-0.184px;">V B-N</span>
<span class="t" style="left:86.58px;top:44.22px;font-size:11.5px;line-height:14px;color:#000;letter-spacing:-0.428px;">63.509V</span>
<span class="t" style="left:163.75px;top:44.22px;font-size:11.5px;line-height:14px;color:#000;letter-spacing:-0.389px;">-120.000°</span>
<span class="t" style="left:244.55px;top:44.22px;font-size:11.5px;line-height:14px;color:#000;letter-spacing:-0.466px;">50.000Hz</span>
<span class="t" style="left:6.10px;top:62.22px;font-size:11.5px;line-height:14px;color:#000;letter-spacing:-0.188px;">V C-N</span>
<span class="t" style="left:86.58px;top:62.22px;font-size:11.5px;line-height:14px;color:#000;letter-spacing:-0.428px;">63.509V</span>
<span class="t" style="left:165.53px;top:62.22px;font-size:11.5px;line-height:14px;color:#000;letter-spacing:-0.404px;">120.000°</span>
<span class="t" style="left:244.55px;top:62.22px;font-size:11.5px;line-height:14px;color:#000;letter-spacing:-0.466px;">50.000Hz</span>
<span class="t" style="left:6.10px;top:80.22px;font-size:11.5px;line-height:14px;color:#000;letter-spacing:-0.181px;">V Aux-N</span>
<span class="t" style="left:89.55px;top:80.22px;font-size:11.5px;line-height:14px;color:#000;letter-spacing:-0.425px;">0.000V</span>
<span class="t" style="left:171.48px;top:80.22px;font-size:11.5px;line-height:14px;color:#000;letter-spacing:-0.389px;">0.000°</span>
<span class="t" style="left:244.55px;top:80.22px;font-size:11.5px;line-height:14px;color:#000;letter-spacing:-0.466px;">50.000Hz</span>
<span class="t" style="left:6.10px;top:98.22px;font-size:11.5px;line-height:14px;color:#000;letter-spacing:-0.134px;">I A</span>
<span class="t" style="left:89.55px;top:98.22px;font-size:11.5px;line-height:14px;color:#000;letter-spacing:-0.425px;">2.000A</span>
<span class="t" style="left:166.73px;top:98.22px;font-size:11.5px;line-height:14px;color:#000;letter-spacing:-0.381px;">-74.943°</span>
<span class="t" style="left:244.55px;top:98.22px;font-size:11.5px;line-height:14px;color:#000;letter-spacing:-0.466px;">50.000Hz</span>
<span class="t" style="left:6.10px;top:116.22px;font-size:11.5px;line-height:14px;color:#000;letter-spacing:-0.141px;">I B</span>
<span class="t" style="left:89.55px;top:116.22px;font-size:11.5px;line-height:14px;color:#000;letter-spacing:-0.425px;">0.000A</span>
<span class="t" style="left:171.48px;top:116.22px;font-size:11.5px;line-height:14px;color:#000;letter-spacing:-0.389px;">0.000°</span>
<span class="t" style="left:244.55px;top:116.22px;font-size:11.5px;line-height:14px;color:#000;letter-spacing:-0.466px;">50.000Hz</span>
<span class="t" style="left:6.10px;top:134.22px;font-size:11.5px;line-height:14px;color:#000;letter-spacing:-0.147px;">I C</span>
<span class="t" style="left:89.55px;top:134.22px;font-size:11.5px;line-height:14px;color:#000;letter-spacing:-0.425px;">0.000A</span>
<span class="t" style="left:171.48px;top:134.22px;font-size:11.5px;line-height:14px;color:#000;letter-spacing:-0.389px;">0.000°</span>
<span class="t" style="left:244.55px;top:134.22px;font-size:11.5px;line-height:14px;color:#000;letter-spacing:-0.466px;">50.000Hz</span></div>
<div style="left:1505px;top:153px;width:410px;height:255px;background:#fff;overflow:hidden;border-left:1px solid #9a9a9a;border-bottom:1px solid #9a9a9a;border-right:1px solid #5a5a5a;box-sizing:content-box"><svg style="left:0;top:0;width:410px;height:255px" viewBox="1506 153 410 255"><path d="M1711.25 281.50L2011.25 281.50" stroke="#6c6c6c" stroke-width="1" stroke-dasharray="4.2 3.6" fill="none"/><path d="M1711.25 281.50L1971.06 131.50" stroke="#6c6c6c" stroke-width="1" stroke-dasharray="4.2 3.6" fill="none"/><path d="M1711.25 281.50L1861.25 21.69" stroke="#6c6c6c" stroke-width="1" stroke-dasharray="4.2 3.6" fill="none"/><path d="M1711.25 281.50L1711.25 -18.50" stroke="#6c6c6c" stroke-width="1" stroke-dasharray="4.2 3.6" fill="none"/><path d="M1711.25 281.50L1561.25 21.69" stroke="#6c6c6c" stroke-width="1" stroke-dasharray="4.2 3.6" fill="none"/><path d="M1711.25 281.50L1451.44 131.50" stroke="#6c6c6c" stroke-width="1" stroke-dasharray="4.2 3.6" fill="none"/><path d="M1711.25 281.50L1411.25 281.50" stroke="#6c6c6c" stroke-width="1" stroke-dasharray="4.2 3.6" fill="none"/><path d="M1711.25 281.50L1451.44 431.50" stroke="#6c6c6c" stroke-width="1" stroke-dasharray="4.2 3.6" fill="none"/><path d="M1711.25 281.50L1561.25 541.31" stroke="#6c6c6c" stroke-width="1" stroke-dasharray="4.2 3.6" fill="none"/><path d="M1711.25 281.50L1711.25 581.50" stroke="#6c6c6c" stroke-width="1" stroke-dasharray="4.2 3.6" fill="none"/><path d="M1711.25 281.50L1861.25 541.31" stroke="#6c6c6c" stroke-width="1" stroke-dasharray="4.2 3.6" fill="none"/><path d="M1711.25 281.50L1971.06 431.50" stroke="#6c6c6c" stroke-width="1" stroke-dasharray="4.2 3.6" fill="none"/><circle cx="1711.25" cy="281.5" r="21.80" stroke="#6c6c6c" stroke-width="1" stroke-dasharray="4.2 3.6" fill="none"/><circle cx="1711.25" cy="281.5" r="43.60" stroke="#6c6c6c" stroke-width="1" stroke-dasharray="4.2 3.6" fill="none"/><circle cx="1711.25" cy="281.5" r="65.40" stroke="#6c6c6c" stroke-width="1" stroke-dasharray="4.2 3.6" fill="none"/><circle cx="1711.25" cy="281.5" r="87.20" stroke="#6c6c6c" stroke-width="1" stroke-dasharray="4.2 3.6" fill="none"/><circle cx="1711.25" cy="281.5" r="109" fill="none" stroke="#1a1a1a" stroke-width="1.1"/><path d="M1711.25 281.50L1663.75 199.23" stroke="#ff0000" stroke-width="1.3"/><path d="M1656.75 187.10L1666.52 197.63L1660.98 200.83z" fill="#ff0000"/><path d="M1711.25 281.50L1663.75 363.77" stroke="#0a7d0a" stroke-width="1.3"/><path d="M1656.75 375.90L1660.98 362.17L1666.52 365.37z" fill="#0a7d0a"/><path d="M1711.25 281.50L1737.95 281.50" stroke="#0000ff" stroke-width="1.3"/><path d="M1751.95 281.50L1737.95 284.70L1737.95 278.30z" fill="#0000ff"/><path d="M1711.25 281.50L1735.93 373.24" stroke="#0000ff" stroke-width="1.3"/><path d="M1739.57 386.76L1732.84 374.07L1739.02 372.41z" fill="#0000ff"/><text x="1702.2" y="166" font-size="12" fill="#0000ff" textLength="17.6" lengthAdjust="spacingAndGlyphs" text-anchor="start">+90</text><text x="1703.5" y="404" font-size="12" fill="#0000ff" textLength="15" lengthAdjust="spacingAndGlyphs" text-anchor="start">-90</text><text x="1827" y="285" font-size="12" fill="#0000ff" textLength="6.2" lengthAdjust="spacingAndGlyphs" text-anchor="start">0</text><text x="1567" y="285" font-size="12" fill="#0000ff" textLength="30.2" lengthAdjust="spacingAndGlyphs" text-anchor="start">+/-180</text><text x="1879.4" y="166.3" font-size="12" fill="#0000ff" textLength="23.2" lengthAdjust="spacingAndGlyphs" text-anchor="start">1 VA</text><text x="1882" y="404" font-size="12" fill="#0000ff" textLength="16.2" lengthAdjust="spacingAndGlyphs" text-anchor="start">2 A</text><text x="1509" y="404" font-size="12" fill="#0000ff" textLength="43" lengthAdjust="spacingAndGlyphs" text-anchor="start">63.509 V</text><text x="1629" y="209.5" font-size="12" fill="#ff0000" textLength="29.2" lengthAdjust="spacingAndGlyphs" text-anchor="start">V C-N</text><text x="1630" y="360.7" font-size="12" fill="#0a7d0a" textLength="28.6" lengthAdjust="spacingAndGlyphs" text-anchor="start">V B-N</text><text x="1710" y="291.5" font-size="12" fill="#0000ff" textLength="26.6" lengthAdjust="spacingAndGlyphs" text-anchor="start">V A-N</text><text x="1740" y="370" font-size="12" fill="#0000ff" textLength="12.5" lengthAdjust="spacingAndGlyphs" text-anchor="start">I A</text><rect x="1872.5" y="172.5" width="21" height="27" fill="#fff" stroke="#e0e0e0"/><rect x="1875.7" y="177" width="7" height="17.6" fill="#1ea0ea"/><rect x="1883.6" y="177.5" width="6" height="16.6" fill="#fff" stroke="#1ea0ea" stroke-width="1"/></svg></div>
<div style="left:1117px;top:410px;width:800px;height:601px;background:#f0f0f0"></div>
<div style="left:1117px;top:413px;width:800px;height:24px;background:#455a64"></div>
<span class="t" style="left:1123.00px;top:417.22px;font-size:11.5px;line-height:14px;color:#fff;letter-spacing:0.233px;">Other View</span>
<div style="left:1892px;top:416px;width:18px;height:18px;border:1.3px solid #fff;box-sizing:border-box"></div>
<div style="left:1223.5px;top:439px;width:104px;height:20px;background:#f0f0f0;border:1px solid #dadada;border-bottom:none;box-sizing:border-box"></div>
<div style="left:1326.5px;top:439px;width:102.5px;height:20px;background:#f0f0f0;border:1px solid #dadada;border-bottom:none;box-sizing:border-box"></div>
<div style="left:1118px;top:459px;width:797px;height:551px;background:#fff;border:1px solid #dcdcdc;box-sizing:border-box"></div>
<div style="left:1118px;top:437px;width:105.5px;height:23px;background:#fff;border-right:1px solid #e3e3e3;box-sizing:border-box"></div>
<span class="t" style="left:1125.50px;top:440.22px;font-size:11.5px;line-height:14px;color:#000;letter-spacing:0.371px;">Impedance View</span>
<span class="t" style="left:1228.00px;top:442.22px;font-size:11.5px;line-height:14px;color:#000;letter-spacing:0.331px;">Time Signal View</span>
<span class="t" style="left:1334.00px;top:442.22px;font-size:11.5px;line-height:14px;color:#000;letter-spacing:0.228px;">Z/t Characteristic</span>
<svg style="left:1118px;top:460px;width:795px;height:548px" viewBox="1118 460 795 548"><defs><clipPath id="cp"><rect x="1172.5" y="480" width="716" height="475.5"/></clipPath><linearGradient id="lens" x1="0" y1="0" x2="1" y2="1"><stop offset="0" stop-color="#4fa9ea"/><stop offset=".55" stop-color="#9edcf8"/><stop offset="1" stop-color="#5ab4ee"/></linearGradient></defs><g clip-path="url(#cp)"><path d="M1172.5 922.5H1888.5M1172.5 885.5H1888.5M1172.5 811.5H1888.5M1172.5 774.5H1888.5M1172.5 737.5H1888.5M1172.5 700.5H1888.5M1172.5 663.5H1888.5M1172.5 627.5H1888.5M1172.5 590.5H1888.5M1172.5 553.5H1888.5M1172.5 516.5H1888.5M1243.5 480V955.5M1353.5 480V955.5M1575.5 480V955.5M1685.5 480V955.5M1796.5 480V955.5" stroke="#dcdcdc" stroke-width="1" fill="none" shape-rendering="crispEdges"/><circle cx="1464.6" cy="848.3" r="110.64" fill="none" stroke="#dedede" stroke-width="1"/><circle cx="1464.6" cy="848.3" r="221.28" fill="none" stroke="#dedede" stroke-width="1"/><circle cx="1464.6" cy="848.3" r="331.92" fill="none" stroke="#dedede" stroke-width="1"/><circle cx="1464.6" cy="848.3" r="442.56" fill="none" stroke="#dedede" stroke-width="1"/><circle cx="1464.6" cy="848.3" r="553.20" fill="none" stroke="#dedede" stroke-width="1"/><circle cx="1464.6" cy="848.3" r="663.84" fill="none" stroke="#dedede" stroke-width="1"/><path d="M1470.51 847.26L2252.45 709.38M1470.24 846.25L2216.35 574.68M1469.80 845.30L2157.42 448.30M1469.20 844.44L2077.44 334.07M1468.46 843.70L1978.83 235.46M1467.60 843.10L1864.60 155.48M1466.65 842.66L1738.22 96.55M1465.64 842.39L1603.52 60.45M1463.56 842.39L1325.68 60.45M1462.55 842.66L1190.98 96.55M1461.60 843.10L1064.60 155.48M1460.74 843.70L950.37 235.46M1460.00 844.44L851.76 334.07M1459.40 845.30L771.78 448.30M1458.96 846.25L712.85 574.68M1458.69 847.26L676.75 709.38M1458.69 849.34L676.75 987.22M1458.96 850.35L712.85 1121.92M1459.40 851.30L771.78 1248.30M1460.00 852.16L851.76 1362.53M1460.74 852.90L950.37 1461.14M1461.60 853.50L1064.60 1541.12M1462.55 853.94L1190.98 1600.05M1463.56 854.21L1325.68 1636.15M1465.64 854.21L1603.52 1636.15M1466.65 853.94L1738.22 1600.05M1467.60 853.50L1864.60 1541.12M1468.46 852.90L1978.83 1461.14M1469.20 852.16L2077.44 1362.53M1469.80 851.30L2157.42 1248.30M1470.24 850.35L2216.35 1121.92M1470.51 849.34L2252.45 987.22" stroke="#c4c4c4" stroke-width="1" stroke-dasharray="1 2.5" fill="none"/><path d="M1464.5 480V955.5M1172.5 848.5H1888.5" stroke="#000" stroke-width="1" shape-rendering="crispEdges"/><path d="M1209.76 795.97L1714.17 927.74A13.78 13.78 0 0 0 1730.61 919.12L1849.30 593.01A13.78 13.78 0 0 0 1836.35 574.52L1283.98 574.52A13.78 13.78 0 0 0 1271.03 583.58L1200.30 777.93A13.78 13.78 0 0 0 1209.76 795.97z" fill="none" stroke="#34c934" stroke-width="1.15" stroke-dasharray="5 3"/><path d="M1231.37 773.13L1709.00 897.90L1816.67 602.08L1293.63 602.08z" fill="none" stroke="#34c934" stroke-width="1.15" stroke-dasharray="5 3"/><path d="M1294.71 813.41L1630.98 901.26A9.19 9.19 0 0 0 1641.94 895.51L1721.07 678.11A9.19 9.19 0 0 0 1712.43 665.78L1344.19 665.78A9.19 9.19 0 0 0 1335.55 671.82L1288.40 801.38A9.19 9.19 0 0 0 1294.71 813.41z" fill="none" stroke="#34c934" stroke-width="1.15" stroke-dasharray="5 3"/><path d="M1309.11 798.19L1627.53 881.37L1699.31 684.15L1350.62 684.15z" fill="none" stroke="#34c934" stroke-width="1.15" stroke-dasharray="5 3"/><path d="M1379.65 830.86L1547.79 874.78A4.59 4.59 0 0 0 1553.27 871.91L1592.83 763.20A4.59 4.59 0 0 0 1588.52 757.04L1404.39 757.04A4.59 4.59 0 0 0 1400.08 760.06L1376.50 824.84A4.59 4.59 0 0 0 1379.65 830.86z" fill="none" stroke="#34c934" stroke-width="1.15" stroke-dasharray="5 3"/><path d="M1386.86 823.24L1546.07 864.83L1581.96 766.23L1407.61 766.23z" fill="none" stroke="#34c934" stroke-width="1.15" stroke-dasharray="5 3"/><path d="M1213.24 782.64L1717.66 914.40L1836.35 588.30L1283.98 588.30 z" fill="none" stroke="#1414ff" stroke-width="1.25" stroke-linejoin="miter"/><path d="M1297.03 804.53L1633.30 892.37L1712.43 674.96L1344.19 674.96 z" fill="none" stroke="#1414ff" stroke-width="1.25" stroke-linejoin="miter"/><path d="M1380.81 826.41L1548.95 870.33L1588.52 761.63L1404.39 761.63 z" fill="none" stroke="#1414ff" stroke-width="1.25" stroke-linejoin="miter"/><path d="M1396.87 1036.12L1609.94 453.88" stroke="#ffa500" stroke-width="1.2"/><path d="M1498.93 742.68L1508.32 746.12" stroke="#ffa500" stroke-width="1.2"/><path d="M1474.50 795.5L1843.30 795.5" stroke="#000" stroke-width="1" shape-rendering="crispEdges"/><path d="M1474.50 795.50L1793.89 611.10" stroke="#1c1c1c" stroke-width="1.2"/><path d="M1474.50 795.50L1658.90 476.11" stroke="#1c1c1c" stroke-width="1.2"/><path d="M1474.5 795.50L1474.5 426.70" stroke="#000" stroke-width="1" shape-rendering="crispEdges"/><path d="M1474.50 795.50L1290.10 476.11" stroke="#1c1c1c" stroke-width="1.2"/><path d="M1474.50 795.50L1155.11 611.10" stroke="#1c1c1c" stroke-width="1.2"/><path d="M1474.50 795.5L1105.70 795.5" stroke="#000" stroke-width="1" shape-rendering="crispEdges"/><path d="M1474.50 795.50L1155.11 979.90" stroke="#1c1c1c" stroke-width="1.2"/><path d="M1474.50 795.50L1290.10 1114.89" stroke="#1c1c1c" stroke-width="1.2"/><path d="M1474.5 795.50L1474.5 1164.30" stroke="#000" stroke-width="1" shape-rendering="crispEdges"/><path d="M1474.50 795.50L1658.90 1114.89" stroke="#1c1c1c" stroke-width="1.2"/><path d="M1474.50 795.50L1793.89 979.90" stroke="#9a1c1c" stroke-width="1.3"/><path d="M1466.5 795.5h16M1474.5 787.5v16" stroke="#ff0000" stroke-width="1.2"/></g><path d="M1172.5 480V955.5H1888.5M1166 922.5H1172.5M1166 885.5H1172.5M1166 848.5H1172.5M1166 811.5H1172.5M1166 774.5H1172.5M1166 737.5H1172.5M1166 700.5H1172.5M1166 663.5H1172.5M1166 627.5H1172.5M1166 590.5H1172.5M1166 553.5H1172.5M1166 516.5H1172.5M1243.5 955.5V962M1353.5 955.5V962M1464.5 955.5V962M1575.5 955.5V962M1685.5 955.5V962M1796.5 955.5V962" stroke="#000" stroke-width="1" fill="none" shape-rendering="crispEdges"/><text x="1165.5" y="925.86" font-size="10.5" fill="#000" text-anchor="end">-8</text><text x="1165.5" y="888.98" font-size="10.5" fill="#000" text-anchor="end">-4</text><text x="1165.5" y="852.1" font-size="10.5" fill="#000" text-anchor="end">0</text><text x="1165.5" y="815.22" font-size="10.5" fill="#000" text-anchor="end">4</text><text x="1165.5" y="778.34" font-size="10.5" fill="#000" text-anchor="end">8</text><text x="1165.5" y="741.46" font-size="10.5" fill="#000" text-anchor="end">12</text><text x="1165.5" y="704.58" font-size="10.5" fill="#000" text-anchor="end">16</text><text x="1165.5" y="667.7" font-size="10.5" fill="#000" text-anchor="end">20</text><text x="1165.5" y="630.82" font-size="10.5" fill="#000" text-anchor="end">24</text><text x="1165.5" y="593.94" font-size="10.5" fill="#000" text-anchor="end">28</text><text x="1165.5" y="557.06" font-size="10.5" fill="#000" text-anchor="end">32</text><text x="1165" y="518.3" font-size="10.5" fill="#000" text-anchor="end" textLength="17" lengthAdjust="spacingAndGlyphs">X/Ω</text><text x="1242.82" y="971.5" font-size="10.5" fill="#000" text-anchor="middle">-24</text><text x="1353.46" y="971.5" font-size="10.5" fill="#000" text-anchor="middle">-12</text><text x="1464.1" y="971.5" font-size="10.5" fill="#000" text-anchor="middle">0</text><text x="1574.74" y="971.5" font-size="10.5" fill="#000" text-anchor="middle">12</text><text x="1685.38" y="971.5" font-size="10.5" fill="#000" text-anchor="middle">24</text><text x="1791" y="976" font-size="10.5" fill="#000" text-anchor="middle" textLength="16.5" lengthAdjust="spacingAndGlyphs">R/Ω</text><rect x="1844.9" y="840.7" width="32.8" height="32.4" fill="#fff" stroke="#a3a3a3" stroke-width="1.8"/><path d="M1864.3 859.8L1869.8 864.8" stroke="#9aa0a6" stroke-width="4" stroke-linecap="butt"/><path d="M1869.4 864.5L1873.6 868.4" stroke="#f39c1a" stroke-width="5.2" stroke-linecap="round"/><path d="M1870.4 863.3L1874.6 867.2" stroke="#fbc968" stroke-width="1.6" stroke-linecap="round"/><circle cx="1857.8" cy="853.5" r="10.3" fill="#f1f1f1" stroke="#8c8c8c" stroke-width="1"/><circle cx="1857.8" cy="853.5" r="8" fill="url(#lens)" stroke="#3f8fcf" stroke-width=".9"/><path d="M1853.6 853.8h8.400" stroke="#1d5c96" stroke-width="2"/><path d="M1857.8 849.6v8.400" stroke="#1d5c96" stroke-width="2"/><rect x="1844.5" y="875.5" width="33" height="32.6" fill="#fff" stroke="#a0a0a0" stroke-width="1"/><path d="M1864.3 894.8L1869.8 899.8" stroke="#9aa0a6" stroke-width="4" stroke-linecap="butt"/><path d="M1869.4 899.5L1873.6 903.4" stroke="#f39c1a" stroke-width="5.2" stroke-linecap="round"/><path d="M1870.4 898.3L1874.6 902.2" stroke="#fbc968" stroke-width="1.6" stroke-linecap="round"/><circle cx="1857.8" cy="888.5" r="10.3" fill="#f1f1f1" stroke="#8c8c8c" stroke-width="1"/><circle cx="1857.8" cy="888.5" r="8" fill="url(#lens)" stroke="#3f8fcf" stroke-width=".9"/><path d="M1853.6 888.8h8.400" stroke="#1d5c96" stroke-width="2"/><rect x="1844.5" y="910" width="33" height="32.6" fill="#fff" stroke="#a0a0a0" stroke-width="1"/><path d="M1864.3 929.3L1869.8 934.3" stroke="#9aa0a6" stroke-width="4" stroke-linecap="butt"/><path d="M1869.4 934.0L1873.6 937.9" stroke="#f39c1a" stroke-width="5.2" stroke-linecap="round"/><path d="M1870.4 932.8L1874.6 936.7" stroke="#fbc968" stroke-width="1.6" stroke-linecap="round"/><circle cx="1857.8" cy="923" r="10.3" fill="#f1f1f1" stroke="#8c8c8c" stroke-width="1"/><circle cx="1857.8" cy="923" r="8" fill="url(#lens)" stroke="#3f8fcf" stroke-width=".9"/></svg>
<div style="left:0px;top:1011px;width:1917px;height:29px;background:#455a64"></div>
<span class="t" style="left:41.00px;top:1017.22px;font-size:11.5px;line-height:14px;color:#f2f5f6;letter-spacing:0.173px;">History Status</span>
<span class="t" style="left:129.00px;top:1017.22px;font-size:11.5px;line-height:14px;color:#f2f5f6;letter-spacing:0.086px;">BI/BO Status</span>
<span class="t" style="left:230.00px;top:1017.22px;font-size:11.5px;line-height:14px;color:#f2f5f6;letter-spacing:0.294px;">Alarm</span>
<span class="t" style="left:295.50px;top:1017.22px;font-size:11.5px;line-height:14px;color:#f2f5f6;letter-spacing:-0.766px;">AuxDCV</span>
<svg style="left:0;top:1010px;width:1917px;height:30px" viewBox="0 1010 1917 30"><circle cx="216.7" cy="1024" r="8.2" fill="none" stroke="#fff" stroke-width="1.9"/><path d="M216.7 1018.4v7.4" stroke="#fff" stroke-width="2.2"/><circle cx="216.7" cy="1028.5" r="1.25" fill="#fff"/><rect x="272" y="1014.7" width="19.5" height="19" fill="none" stroke="#fff" stroke-width="1.1"/><text x="281.8" y="1023.3" font-size="9.5" font-weight="bold" fill="#fff" text-anchor="middle" textLength="16.5" lengthAdjust="spacingAndGlyphs">Aux</text><text x="281.8" y="1032.2" font-size="9.5" font-weight="bold" fill="#fff" text-anchor="middle" textLength="13.5" lengthAdjust="spacingAndGlyphs">DC</text><circle cx="1762" cy="1023.8" r="8.9" fill="none" stroke="#0b0b6e" stroke-width="2.1"/><path d="M1762 1018.4v5.8h5.600" fill="none" stroke="#0b0b6e" stroke-width="1.900"/><path d="M1762 1015v2.300M1762 1030.300v2.300M1753.200 1023.800h2.300M1768.500 1023.800h2.300" stroke="#0b0b6e" stroke-width="1.500"/><path d="M1779.300 1014.600h5v17.400h-5" fill="none" stroke="#c9c2ab" stroke-width="1.300"/><rect x="1782" y="1017.300" width="3.200" height="12.400" rx="1" fill="#c9c2ab"/><path d="M1795.300 1014.600h-5v17.400h5" fill="none" stroke="#0b0b6e" stroke-width="1.300"/><rect x="1789.300" y="1017.300" width="3.300" height="12.400" rx="1" fill="#0b0b6e"/><path d="M1787.300 1015.500v16" stroke="#0b0b6e" stroke-width="1" stroke-dasharray="1 1"/><text x="1803.800" y="1028.600" font-size="11.500" fill="#0b0b6e" textLength="20.500" lengthAdjust="spacingAndGlyphs">ABS</text><path d="M1861.300 1015.700A9.600 9.600 0 1 1 1857.500 1019.500" fill="none" stroke="#fff" stroke-width="1.400"/><circle cx="1859.200" cy="1017.100" r="1.900" fill="#dfe5e8"/><path d="M1863.400 1020.500v7.800M1868.900 1020.500v7.800" stroke="#fff" stroke-width="2.300"/><g fill="none" stroke="#fff" stroke-width="1.200"><rect x="1888" y="1015.600" width="12.400" height="11.400"/><rect x="1883.600" y="1015.600" width="3.800" height="6"/><path d="M1892.400 1027v5M1888.700 1032.300h8.400M1885.500 1021.600v11"/></g><path d="M1882.600 1025.500l7.400 7M1890 1025.500l-7.400 7" stroke="#e81c1c" stroke-width="1.200"/></svg>
</body></html>
